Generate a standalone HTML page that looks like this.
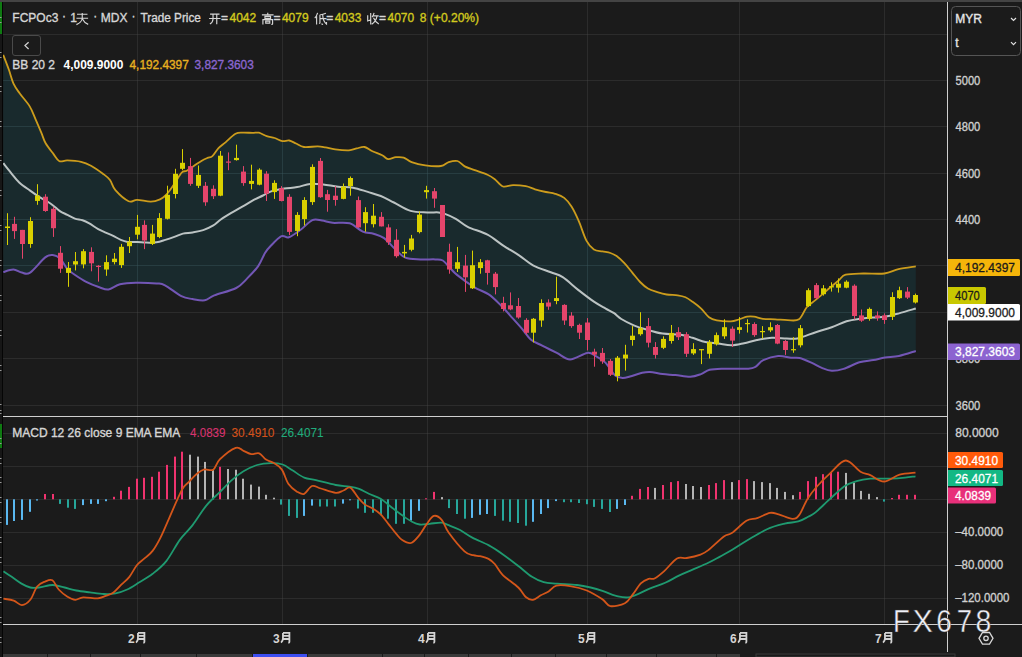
<!DOCTYPE html><html><head><meta charset="utf-8"><style>html,body{margin:0;padding:0;background:#1b1b1b;overflow:hidden}svg{display:block}text{font-family:"Liberation Sans",sans-serif}</style></head><body>
<svg width="1022" height="657" viewBox="0 0 1022 657">
<rect x="0" y="0" width="1022" height="657" fill="#1b1b1b"/>
<rect x="0" y="0" width="1022" height="2" fill="#444444"/>
<rect x="3" y="34" width="944" height="1" fill="#4a4a4a" fill-opacity="0.38"/><rect x="3" y="80" width="944" height="1" fill="#4a4a4a" fill-opacity="0.38"/><rect x="3" y="126" width="944" height="1" fill="#4a4a4a" fill-opacity="0.38"/><rect x="3" y="173" width="944" height="1" fill="#4a4a4a" fill-opacity="0.38"/><rect x="3" y="219" width="944" height="1" fill="#4a4a4a" fill-opacity="0.38"/><rect x="3" y="265" width="944" height="1" fill="#4a4a4a" fill-opacity="0.38"/><rect x="3" y="312" width="944" height="1" fill="#4a4a4a" fill-opacity="0.38"/><rect x="3" y="358" width="944" height="1" fill="#4a4a4a" fill-opacity="0.38"/><rect x="3" y="405" width="944" height="1" fill="#4a4a4a" fill-opacity="0.38"/><rect x="3" y="433" width="944" height="1" fill="#4a4a4a" fill-opacity="0.38"/><rect x="3" y="466" width="944" height="1" fill="#4a4a4a" fill-opacity="0.38"/><rect x="3" y="499" width="944" height="1" fill="#4a4a4a" fill-opacity="0.38"/><rect x="3" y="532" width="944" height="1" fill="#4a4a4a" fill-opacity="0.38"/><rect x="3" y="565" width="944" height="1" fill="#4a4a4a" fill-opacity="0.38"/><rect x="3" y="598" width="944" height="1" fill="#4a4a4a" fill-opacity="0.38"/><rect x="137" y="2" width="1" height="622" fill="#4a4a4a" fill-opacity="0.38"/><rect x="282" y="2" width="1" height="622" fill="#4a4a4a" fill-opacity="0.38"/><rect x="427" y="2" width="1" height="622" fill="#4a4a4a" fill-opacity="0.38"/><rect x="587" y="2" width="1" height="622" fill="#4a4a4a" fill-opacity="0.38"/><rect x="739" y="2" width="1" height="622" fill="#4a4a4a" fill-opacity="0.38"/><rect x="884" y="2" width="1" height="622" fill="#4a4a4a" fill-opacity="0.38"/>
<defs><clipPath id="bandclip"><path d="M3.20 54.90 C4.15 57.38 7.18 65.02 8.90 69.80 C10.62 74.58 11.68 79.65 13.50 83.60 C15.32 87.55 17.10 89.70 19.80 93.50 C22.50 97.30 27.07 102.10 29.70 106.40 C32.33 110.70 33.63 114.85 35.60 119.30 C37.57 123.75 39.85 129.15 41.50 133.10 C43.15 137.05 43.52 139.53 45.50 143.00 C47.48 146.47 51.08 150.87 53.40 153.90 C55.72 156.93 57.08 160.12 59.40 161.20 C61.72 162.28 63.68 160.30 67.30 160.40 C70.92 160.50 77.15 160.92 81.10 161.80 C85.05 162.68 87.37 163.72 91.00 165.70 C94.63 167.68 99.73 171.32 102.90 173.70 C106.07 176.08 107.92 177.25 110.00 180.00 C112.08 182.75 112.30 186.67 115.40 190.20 C118.50 193.73 124.98 199.60 128.60 201.20 C132.22 202.80 133.40 199.73 137.10 199.80 C140.80 199.87 146.98 201.68 150.80 201.60 C154.62 201.52 157.45 200.40 160.00 199.30 C162.55 198.20 164.07 197.03 166.10 195.00 C168.13 192.97 170.17 190.03 172.20 187.10 C174.23 184.17 176.58 179.93 178.30 177.40 C180.02 174.87 181.08 173.02 182.50 171.90 C183.92 170.78 184.87 171.72 186.80 170.70 C188.73 169.68 191.67 167.43 194.10 165.80 C196.53 164.17 199.17 162.22 201.40 160.90 C203.63 159.58 205.67 158.70 207.50 157.90 C209.33 157.10 210.57 157.73 212.40 156.10 C214.23 154.47 216.27 150.43 218.50 148.10 C220.73 145.77 222.97 144.48 225.80 142.10 C228.63 139.72 232.67 135.38 235.50 133.80 C238.33 132.22 239.95 132.75 242.80 132.60 C245.65 132.45 249.92 132.88 252.60 132.90 C255.28 132.92 256.55 132.15 258.90 132.70 C261.25 133.25 264.08 135.32 266.70 136.20 C269.32 137.08 271.98 137.18 274.60 138.00 C277.22 138.82 279.97 140.68 282.40 141.10 C284.83 141.52 286.92 140.10 289.20 140.50 C291.48 140.90 293.65 142.42 296.10 143.50 C298.55 144.58 300.32 146.52 303.90 147.00 C307.48 147.48 314.00 146.33 317.60 146.40 C321.20 146.47 322.57 146.90 325.50 147.40 C328.43 147.90 331.30 148.92 335.20 149.40 C339.10 149.88 345.30 150.47 348.90 150.30 C352.50 150.13 354.18 148.95 356.80 148.40 C359.42 147.85 362.00 146.52 364.60 147.00 C367.20 147.48 369.47 149.93 372.40 151.30 C375.33 152.67 379.58 153.90 382.20 155.20 C384.82 156.50 385.82 158.77 388.10 159.10 C390.38 159.43 393.30 157.45 395.90 157.20 C398.50 156.95 401.08 156.78 403.70 157.60 C406.32 158.42 408.00 160.80 411.60 162.10 C415.20 163.40 420.42 164.75 425.30 165.40 C430.18 166.05 437.00 166.55 440.90 166.00 C444.80 165.45 445.95 162.93 448.70 162.10 C451.45 161.27 454.73 160.28 457.40 161.00 C460.07 161.72 461.82 164.88 464.70 166.40 C467.58 167.92 470.90 168.72 474.70 170.10 C478.50 171.48 484.15 173.18 487.50 174.70 C490.85 176.22 492.22 177.23 494.80 179.20 C497.38 181.17 499.95 185.52 503.00 186.50 C506.05 187.48 509.30 185.15 513.10 185.10 C516.90 185.05 522.15 185.50 525.80 186.20 C529.45 186.90 531.65 188.33 535.00 189.30 C538.35 190.27 542.55 191.25 545.90 192.00 C549.25 192.75 552.05 192.82 555.10 193.80 C558.15 194.78 561.47 195.77 564.20 197.90 C566.93 200.03 569.07 202.72 571.50 206.60 C573.93 210.48 576.32 215.53 578.80 221.20 C581.28 226.87 583.88 235.90 586.40 240.60 C588.92 245.30 591.22 247.60 593.90 249.40 C596.58 251.20 599.75 250.80 602.50 251.40 C605.25 252.00 608.05 252.22 610.40 253.00 C612.75 253.78 614.27 254.40 616.60 256.10 C618.93 257.80 621.78 260.45 624.40 263.20 C627.02 265.95 629.68 269.47 632.30 272.60 C634.92 275.73 637.50 279.35 640.10 282.00 C642.70 284.65 645.03 286.82 647.90 288.50 C650.77 290.18 654.17 291.10 657.30 292.10 C660.43 293.10 663.30 293.97 666.70 294.50 C670.10 295.03 674.57 294.83 677.70 295.30 C680.83 295.77 682.90 296.13 685.50 297.30 C688.10 298.47 690.68 300.42 693.30 302.30 C695.92 304.18 698.58 306.12 701.20 308.60 C703.82 311.08 706.40 315.25 709.00 317.20 C711.60 319.15 713.15 319.60 716.80 320.30 C720.45 321.00 727.25 321.53 730.90 321.40 C734.55 321.27 736.02 320.30 738.70 319.50 C741.38 318.70 744.43 317.08 747.00 316.60 C749.57 316.12 751.45 316.23 754.10 316.60 C756.75 316.97 759.38 318.35 762.90 318.80 C766.42 319.25 771.08 319.07 775.20 319.30 C779.32 319.53 783.63 320.20 787.60 320.20 C791.57 320.20 795.78 321.50 799.00 319.30 C802.22 317.10 804.12 310.23 806.90 307.00 C809.68 303.77 812.17 302.85 815.70 299.90 C819.23 296.95 824.28 292.53 828.10 289.30 C831.92 286.07 835.67 282.93 838.60 280.50 C841.53 278.07 841.58 275.87 845.70 274.70 C849.82 273.53 856.85 273.70 863.30 273.50 C869.75 273.30 878.53 274.23 884.40 273.50 C890.27 272.77 893.27 270.28 898.50 269.10 C903.73 267.92 912.92 266.85 915.80 266.40 L915.80 351.00 C913.00 351.83 904.12 354.90 899.00 356.00 C893.88 357.10 889.38 356.93 885.10 357.60 C880.82 358.27 877.58 359.22 873.30 360.00 C869.02 360.78 864.35 360.82 859.40 362.30 C854.45 363.78 848.22 367.48 843.60 368.90 C838.98 370.32 835.33 370.97 831.70 370.80 C828.07 370.63 825.10 369.22 821.80 367.90 C818.50 366.58 815.60 364.55 811.90 362.90 C808.20 361.25 803.08 358.87 799.60 358.00 C796.12 357.13 794.57 358.03 791.00 357.70 C787.43 357.37 782.82 355.58 778.20 356.00 C773.58 356.42 767.03 358.43 763.30 360.20 C759.57 361.97 758.28 365.18 755.80 366.60 C753.32 368.02 753.90 368.35 748.40 368.70 C742.90 369.05 729.27 368.52 722.80 368.70 C716.33 368.88 713.23 368.90 709.60 369.80 C705.97 370.70 704.20 372.93 701.00 374.10 C697.80 375.27 694.67 376.63 690.40 376.80 C686.13 376.97 680.03 375.55 675.40 375.10 C670.77 374.65 666.85 374.63 662.60 374.10 C658.35 373.57 653.45 372.08 649.90 371.90 C646.35 371.72 644.62 372.23 641.30 373.00 C637.98 373.77 633.13 375.68 630.00 376.50 C626.87 377.32 624.97 378.07 622.50 377.90 C620.03 377.73 618.05 378.05 615.20 375.50 C612.35 372.95 608.65 365.85 605.40 362.60 C602.15 359.35 598.73 357.62 595.70 356.00 C592.67 354.38 591.47 352.33 587.20 352.90 C582.93 353.47 575.17 359.40 570.10 359.40 C565.03 359.40 561.45 355.20 556.80 352.90 C552.15 350.60 546.50 347.80 542.20 345.60 C537.90 343.40 534.25 342.37 531.00 339.70 C527.75 337.03 525.70 333.10 522.70 329.60 C519.70 326.10 516.65 322.75 513.00 318.70 C509.35 314.65 504.85 309.35 500.80 305.30 C496.75 301.25 493.15 297.43 488.70 294.40 C484.25 291.37 479.38 290.35 474.10 287.10 C468.82 283.85 461.07 278.15 457.00 274.90 C452.93 271.65 452.07 270.00 449.70 267.60 C447.33 265.20 445.20 261.87 442.80 260.50 C440.40 259.13 439.03 259.58 435.30 259.40 C431.57 259.22 425.38 259.68 420.40 259.40 C415.42 259.12 409.67 259.48 405.40 257.70 C401.13 255.92 398.35 251.97 394.80 248.70 C391.25 245.43 387.65 240.58 384.10 238.10 C380.55 235.62 377.05 234.87 373.50 233.80 C369.95 232.73 366.77 233.45 362.80 231.70 C358.83 229.95 354.73 224.78 349.70 223.30 C344.67 221.82 337.22 223.25 332.60 222.80 C327.98 222.35 325.37 221.03 322.00 220.60 C318.63 220.17 315.97 218.67 312.40 220.20 C308.83 221.73 304.52 226.95 300.60 229.80 C296.68 232.65 292.08 236.23 288.90 237.30 C285.72 238.37 284.52 234.78 281.50 236.20 C278.48 237.62 273.55 243.00 270.80 245.80 C268.05 248.60 267.10 249.62 265.00 253.00 C262.90 256.38 261.17 261.87 258.20 266.10 C255.23 270.33 250.87 274.75 247.20 278.40 C243.53 282.05 241.68 285.17 236.20 288.00 C230.72 290.83 219.55 293.35 214.30 295.40 C209.05 297.45 208.35 299.70 204.70 300.30 C201.05 300.90 196.28 299.68 192.40 299.00 C188.52 298.32 185.97 298.48 181.40 296.20 C176.83 293.92 169.15 287.43 165.00 285.30 C160.85 283.17 161.35 283.83 156.50 283.40 C151.65 282.97 141.98 282.55 135.90 282.70 C129.82 282.85 124.57 283.17 120.00 284.30 C115.43 285.43 111.93 289.00 108.50 289.50 C105.07 290.00 103.20 288.62 99.40 287.30 C95.60 285.98 89.98 283.82 85.70 281.60 C81.42 279.38 76.82 276.15 73.70 274.00 C70.58 271.85 69.23 271.25 67.00 268.70 C64.77 266.15 62.68 260.98 60.30 258.70 C57.92 256.42 55.22 255.22 52.70 255.00 C50.18 254.78 48.97 254.47 45.20 257.40 C41.43 260.33 34.00 270.07 30.10 272.60 C26.20 275.13 24.58 273.10 21.80 272.60 C19.02 272.10 16.48 269.68 13.40 269.60 C10.32 269.52 4.98 271.68 3.30 272.10 Z"/></clipPath></defs>
<path d="M3.20 54.90 C4.15 57.38 7.18 65.02 8.90 69.80 C10.62 74.58 11.68 79.65 13.50 83.60 C15.32 87.55 17.10 89.70 19.80 93.50 C22.50 97.30 27.07 102.10 29.70 106.40 C32.33 110.70 33.63 114.85 35.60 119.30 C37.57 123.75 39.85 129.15 41.50 133.10 C43.15 137.05 43.52 139.53 45.50 143.00 C47.48 146.47 51.08 150.87 53.40 153.90 C55.72 156.93 57.08 160.12 59.40 161.20 C61.72 162.28 63.68 160.30 67.30 160.40 C70.92 160.50 77.15 160.92 81.10 161.80 C85.05 162.68 87.37 163.72 91.00 165.70 C94.63 167.68 99.73 171.32 102.90 173.70 C106.07 176.08 107.92 177.25 110.00 180.00 C112.08 182.75 112.30 186.67 115.40 190.20 C118.50 193.73 124.98 199.60 128.60 201.20 C132.22 202.80 133.40 199.73 137.10 199.80 C140.80 199.87 146.98 201.68 150.80 201.60 C154.62 201.52 157.45 200.40 160.00 199.30 C162.55 198.20 164.07 197.03 166.10 195.00 C168.13 192.97 170.17 190.03 172.20 187.10 C174.23 184.17 176.58 179.93 178.30 177.40 C180.02 174.87 181.08 173.02 182.50 171.90 C183.92 170.78 184.87 171.72 186.80 170.70 C188.73 169.68 191.67 167.43 194.10 165.80 C196.53 164.17 199.17 162.22 201.40 160.90 C203.63 159.58 205.67 158.70 207.50 157.90 C209.33 157.10 210.57 157.73 212.40 156.10 C214.23 154.47 216.27 150.43 218.50 148.10 C220.73 145.77 222.97 144.48 225.80 142.10 C228.63 139.72 232.67 135.38 235.50 133.80 C238.33 132.22 239.95 132.75 242.80 132.60 C245.65 132.45 249.92 132.88 252.60 132.90 C255.28 132.92 256.55 132.15 258.90 132.70 C261.25 133.25 264.08 135.32 266.70 136.20 C269.32 137.08 271.98 137.18 274.60 138.00 C277.22 138.82 279.97 140.68 282.40 141.10 C284.83 141.52 286.92 140.10 289.20 140.50 C291.48 140.90 293.65 142.42 296.10 143.50 C298.55 144.58 300.32 146.52 303.90 147.00 C307.48 147.48 314.00 146.33 317.60 146.40 C321.20 146.47 322.57 146.90 325.50 147.40 C328.43 147.90 331.30 148.92 335.20 149.40 C339.10 149.88 345.30 150.47 348.90 150.30 C352.50 150.13 354.18 148.95 356.80 148.40 C359.42 147.85 362.00 146.52 364.60 147.00 C367.20 147.48 369.47 149.93 372.40 151.30 C375.33 152.67 379.58 153.90 382.20 155.20 C384.82 156.50 385.82 158.77 388.10 159.10 C390.38 159.43 393.30 157.45 395.90 157.20 C398.50 156.95 401.08 156.78 403.70 157.60 C406.32 158.42 408.00 160.80 411.60 162.10 C415.20 163.40 420.42 164.75 425.30 165.40 C430.18 166.05 437.00 166.55 440.90 166.00 C444.80 165.45 445.95 162.93 448.70 162.10 C451.45 161.27 454.73 160.28 457.40 161.00 C460.07 161.72 461.82 164.88 464.70 166.40 C467.58 167.92 470.90 168.72 474.70 170.10 C478.50 171.48 484.15 173.18 487.50 174.70 C490.85 176.22 492.22 177.23 494.80 179.20 C497.38 181.17 499.95 185.52 503.00 186.50 C506.05 187.48 509.30 185.15 513.10 185.10 C516.90 185.05 522.15 185.50 525.80 186.20 C529.45 186.90 531.65 188.33 535.00 189.30 C538.35 190.27 542.55 191.25 545.90 192.00 C549.25 192.75 552.05 192.82 555.10 193.80 C558.15 194.78 561.47 195.77 564.20 197.90 C566.93 200.03 569.07 202.72 571.50 206.60 C573.93 210.48 576.32 215.53 578.80 221.20 C581.28 226.87 583.88 235.90 586.40 240.60 C588.92 245.30 591.22 247.60 593.90 249.40 C596.58 251.20 599.75 250.80 602.50 251.40 C605.25 252.00 608.05 252.22 610.40 253.00 C612.75 253.78 614.27 254.40 616.60 256.10 C618.93 257.80 621.78 260.45 624.40 263.20 C627.02 265.95 629.68 269.47 632.30 272.60 C634.92 275.73 637.50 279.35 640.10 282.00 C642.70 284.65 645.03 286.82 647.90 288.50 C650.77 290.18 654.17 291.10 657.30 292.10 C660.43 293.10 663.30 293.97 666.70 294.50 C670.10 295.03 674.57 294.83 677.70 295.30 C680.83 295.77 682.90 296.13 685.50 297.30 C688.10 298.47 690.68 300.42 693.30 302.30 C695.92 304.18 698.58 306.12 701.20 308.60 C703.82 311.08 706.40 315.25 709.00 317.20 C711.60 319.15 713.15 319.60 716.80 320.30 C720.45 321.00 727.25 321.53 730.90 321.40 C734.55 321.27 736.02 320.30 738.70 319.50 C741.38 318.70 744.43 317.08 747.00 316.60 C749.57 316.12 751.45 316.23 754.10 316.60 C756.75 316.97 759.38 318.35 762.90 318.80 C766.42 319.25 771.08 319.07 775.20 319.30 C779.32 319.53 783.63 320.20 787.60 320.20 C791.57 320.20 795.78 321.50 799.00 319.30 C802.22 317.10 804.12 310.23 806.90 307.00 C809.68 303.77 812.17 302.85 815.70 299.90 C819.23 296.95 824.28 292.53 828.10 289.30 C831.92 286.07 835.67 282.93 838.60 280.50 C841.53 278.07 841.58 275.87 845.70 274.70 C849.82 273.53 856.85 273.70 863.30 273.50 C869.75 273.30 878.53 274.23 884.40 273.50 C890.27 272.77 893.27 270.28 898.50 269.10 C903.73 267.92 912.92 266.85 915.80 266.40 L915.80 351.00 C913.00 351.83 904.12 354.90 899.00 356.00 C893.88 357.10 889.38 356.93 885.10 357.60 C880.82 358.27 877.58 359.22 873.30 360.00 C869.02 360.78 864.35 360.82 859.40 362.30 C854.45 363.78 848.22 367.48 843.60 368.90 C838.98 370.32 835.33 370.97 831.70 370.80 C828.07 370.63 825.10 369.22 821.80 367.90 C818.50 366.58 815.60 364.55 811.90 362.90 C808.20 361.25 803.08 358.87 799.60 358.00 C796.12 357.13 794.57 358.03 791.00 357.70 C787.43 357.37 782.82 355.58 778.20 356.00 C773.58 356.42 767.03 358.43 763.30 360.20 C759.57 361.97 758.28 365.18 755.80 366.60 C753.32 368.02 753.90 368.35 748.40 368.70 C742.90 369.05 729.27 368.52 722.80 368.70 C716.33 368.88 713.23 368.90 709.60 369.80 C705.97 370.70 704.20 372.93 701.00 374.10 C697.80 375.27 694.67 376.63 690.40 376.80 C686.13 376.97 680.03 375.55 675.40 375.10 C670.77 374.65 666.85 374.63 662.60 374.10 C658.35 373.57 653.45 372.08 649.90 371.90 C646.35 371.72 644.62 372.23 641.30 373.00 C637.98 373.77 633.13 375.68 630.00 376.50 C626.87 377.32 624.97 378.07 622.50 377.90 C620.03 377.73 618.05 378.05 615.20 375.50 C612.35 372.95 608.65 365.85 605.40 362.60 C602.15 359.35 598.73 357.62 595.70 356.00 C592.67 354.38 591.47 352.33 587.20 352.90 C582.93 353.47 575.17 359.40 570.10 359.40 C565.03 359.40 561.45 355.20 556.80 352.90 C552.15 350.60 546.50 347.80 542.20 345.60 C537.90 343.40 534.25 342.37 531.00 339.70 C527.75 337.03 525.70 333.10 522.70 329.60 C519.70 326.10 516.65 322.75 513.00 318.70 C509.35 314.65 504.85 309.35 500.80 305.30 C496.75 301.25 493.15 297.43 488.70 294.40 C484.25 291.37 479.38 290.35 474.10 287.10 C468.82 283.85 461.07 278.15 457.00 274.90 C452.93 271.65 452.07 270.00 449.70 267.60 C447.33 265.20 445.20 261.87 442.80 260.50 C440.40 259.13 439.03 259.58 435.30 259.40 C431.57 259.22 425.38 259.68 420.40 259.40 C415.42 259.12 409.67 259.48 405.40 257.70 C401.13 255.92 398.35 251.97 394.80 248.70 C391.25 245.43 387.65 240.58 384.10 238.10 C380.55 235.62 377.05 234.87 373.50 233.80 C369.95 232.73 366.77 233.45 362.80 231.70 C358.83 229.95 354.73 224.78 349.70 223.30 C344.67 221.82 337.22 223.25 332.60 222.80 C327.98 222.35 325.37 221.03 322.00 220.60 C318.63 220.17 315.97 218.67 312.40 220.20 C308.83 221.73 304.52 226.95 300.60 229.80 C296.68 232.65 292.08 236.23 288.90 237.30 C285.72 238.37 284.52 234.78 281.50 236.20 C278.48 237.62 273.55 243.00 270.80 245.80 C268.05 248.60 267.10 249.62 265.00 253.00 C262.90 256.38 261.17 261.87 258.20 266.10 C255.23 270.33 250.87 274.75 247.20 278.40 C243.53 282.05 241.68 285.17 236.20 288.00 C230.72 290.83 219.55 293.35 214.30 295.40 C209.05 297.45 208.35 299.70 204.70 300.30 C201.05 300.90 196.28 299.68 192.40 299.00 C188.52 298.32 185.97 298.48 181.40 296.20 C176.83 293.92 169.15 287.43 165.00 285.30 C160.85 283.17 161.35 283.83 156.50 283.40 C151.65 282.97 141.98 282.55 135.90 282.70 C129.82 282.85 124.57 283.17 120.00 284.30 C115.43 285.43 111.93 289.00 108.50 289.50 C105.07 290.00 103.20 288.62 99.40 287.30 C95.60 285.98 89.98 283.82 85.70 281.60 C81.42 279.38 76.82 276.15 73.70 274.00 C70.58 271.85 69.23 271.25 67.00 268.70 C64.77 266.15 62.68 260.98 60.30 258.70 C57.92 256.42 55.22 255.22 52.70 255.00 C50.18 254.78 48.97 254.47 45.20 257.40 C41.43 260.33 34.00 270.07 30.10 272.60 C26.20 275.13 24.58 273.10 21.80 272.60 C19.02 272.10 16.48 269.68 13.40 269.60 C10.32 269.52 4.98 271.68 3.30 272.10 Z" fill="#192a2d"/>
<g clip-path="url(#bandclip)"><rect x="3" y="34" width="944" height="1" fill="#3c5a60" fill-opacity="0.4"/><rect x="3" y="80" width="944" height="1" fill="#3c5a60" fill-opacity="0.4"/><rect x="3" y="126" width="944" height="1" fill="#3c5a60" fill-opacity="0.4"/><rect x="3" y="173" width="944" height="1" fill="#3c5a60" fill-opacity="0.4"/><rect x="3" y="219" width="944" height="1" fill="#3c5a60" fill-opacity="0.4"/><rect x="3" y="265" width="944" height="1" fill="#3c5a60" fill-opacity="0.4"/><rect x="3" y="312" width="944" height="1" fill="#3c5a60" fill-opacity="0.4"/><rect x="3" y="358" width="944" height="1" fill="#3c5a60" fill-opacity="0.4"/><rect x="3" y="405" width="944" height="1" fill="#3c5a60" fill-opacity="0.4"/><rect x="3" y="433" width="944" height="1" fill="#3c5a60" fill-opacity="0.4"/><rect x="3" y="466" width="944" height="1" fill="#3c5a60" fill-opacity="0.4"/><rect x="3" y="499" width="944" height="1" fill="#3c5a60" fill-opacity="0.4"/><rect x="3" y="532" width="944" height="1" fill="#3c5a60" fill-opacity="0.4"/><rect x="3" y="565" width="944" height="1" fill="#3c5a60" fill-opacity="0.4"/><rect x="3" y="598" width="944" height="1" fill="#3c5a60" fill-opacity="0.4"/><rect x="137" y="2" width="1" height="622" fill="#3c5a60" fill-opacity="0.4"/><rect x="282" y="2" width="1" height="622" fill="#3c5a60" fill-opacity="0.4"/><rect x="427" y="2" width="1" height="622" fill="#3c5a60" fill-opacity="0.4"/><rect x="587" y="2" width="1" height="622" fill="#3c5a60" fill-opacity="0.4"/><rect x="739" y="2" width="1" height="622" fill="#3c5a60" fill-opacity="0.4"/><rect x="884" y="2" width="1" height="622" fill="#3c5a60" fill-opacity="0.4"/></g>
<path d="M3.20 54.90 C4.15 57.38 7.18 65.02 8.90 69.80 C10.62 74.58 11.68 79.65 13.50 83.60 C15.32 87.55 17.10 89.70 19.80 93.50 C22.50 97.30 27.07 102.10 29.70 106.40 C32.33 110.70 33.63 114.85 35.60 119.30 C37.57 123.75 39.85 129.15 41.50 133.10 C43.15 137.05 43.52 139.53 45.50 143.00 C47.48 146.47 51.08 150.87 53.40 153.90 C55.72 156.93 57.08 160.12 59.40 161.20 C61.72 162.28 63.68 160.30 67.30 160.40 C70.92 160.50 77.15 160.92 81.10 161.80 C85.05 162.68 87.37 163.72 91.00 165.70 C94.63 167.68 99.73 171.32 102.90 173.70 C106.07 176.08 107.92 177.25 110.00 180.00 C112.08 182.75 112.30 186.67 115.40 190.20 C118.50 193.73 124.98 199.60 128.60 201.20 C132.22 202.80 133.40 199.73 137.10 199.80 C140.80 199.87 146.98 201.68 150.80 201.60 C154.62 201.52 157.45 200.40 160.00 199.30 C162.55 198.20 164.07 197.03 166.10 195.00 C168.13 192.97 170.17 190.03 172.20 187.10 C174.23 184.17 176.58 179.93 178.30 177.40 C180.02 174.87 181.08 173.02 182.50 171.90 C183.92 170.78 184.87 171.72 186.80 170.70 C188.73 169.68 191.67 167.43 194.10 165.80 C196.53 164.17 199.17 162.22 201.40 160.90 C203.63 159.58 205.67 158.70 207.50 157.90 C209.33 157.10 210.57 157.73 212.40 156.10 C214.23 154.47 216.27 150.43 218.50 148.10 C220.73 145.77 222.97 144.48 225.80 142.10 C228.63 139.72 232.67 135.38 235.50 133.80 C238.33 132.22 239.95 132.75 242.80 132.60 C245.65 132.45 249.92 132.88 252.60 132.90 C255.28 132.92 256.55 132.15 258.90 132.70 C261.25 133.25 264.08 135.32 266.70 136.20 C269.32 137.08 271.98 137.18 274.60 138.00 C277.22 138.82 279.97 140.68 282.40 141.10 C284.83 141.52 286.92 140.10 289.20 140.50 C291.48 140.90 293.65 142.42 296.10 143.50 C298.55 144.58 300.32 146.52 303.90 147.00 C307.48 147.48 314.00 146.33 317.60 146.40 C321.20 146.47 322.57 146.90 325.50 147.40 C328.43 147.90 331.30 148.92 335.20 149.40 C339.10 149.88 345.30 150.47 348.90 150.30 C352.50 150.13 354.18 148.95 356.80 148.40 C359.42 147.85 362.00 146.52 364.60 147.00 C367.20 147.48 369.47 149.93 372.40 151.30 C375.33 152.67 379.58 153.90 382.20 155.20 C384.82 156.50 385.82 158.77 388.10 159.10 C390.38 159.43 393.30 157.45 395.90 157.20 C398.50 156.95 401.08 156.78 403.70 157.60 C406.32 158.42 408.00 160.80 411.60 162.10 C415.20 163.40 420.42 164.75 425.30 165.40 C430.18 166.05 437.00 166.55 440.90 166.00 C444.80 165.45 445.95 162.93 448.70 162.10 C451.45 161.27 454.73 160.28 457.40 161.00 C460.07 161.72 461.82 164.88 464.70 166.40 C467.58 167.92 470.90 168.72 474.70 170.10 C478.50 171.48 484.15 173.18 487.50 174.70 C490.85 176.22 492.22 177.23 494.80 179.20 C497.38 181.17 499.95 185.52 503.00 186.50 C506.05 187.48 509.30 185.15 513.10 185.10 C516.90 185.05 522.15 185.50 525.80 186.20 C529.45 186.90 531.65 188.33 535.00 189.30 C538.35 190.27 542.55 191.25 545.90 192.00 C549.25 192.75 552.05 192.82 555.10 193.80 C558.15 194.78 561.47 195.77 564.20 197.90 C566.93 200.03 569.07 202.72 571.50 206.60 C573.93 210.48 576.32 215.53 578.80 221.20 C581.28 226.87 583.88 235.90 586.40 240.60 C588.92 245.30 591.22 247.60 593.90 249.40 C596.58 251.20 599.75 250.80 602.50 251.40 C605.25 252.00 608.05 252.22 610.40 253.00 C612.75 253.78 614.27 254.40 616.60 256.10 C618.93 257.80 621.78 260.45 624.40 263.20 C627.02 265.95 629.68 269.47 632.30 272.60 C634.92 275.73 637.50 279.35 640.10 282.00 C642.70 284.65 645.03 286.82 647.90 288.50 C650.77 290.18 654.17 291.10 657.30 292.10 C660.43 293.10 663.30 293.97 666.70 294.50 C670.10 295.03 674.57 294.83 677.70 295.30 C680.83 295.77 682.90 296.13 685.50 297.30 C688.10 298.47 690.68 300.42 693.30 302.30 C695.92 304.18 698.58 306.12 701.20 308.60 C703.82 311.08 706.40 315.25 709.00 317.20 C711.60 319.15 713.15 319.60 716.80 320.30 C720.45 321.00 727.25 321.53 730.90 321.40 C734.55 321.27 736.02 320.30 738.70 319.50 C741.38 318.70 744.43 317.08 747.00 316.60 C749.57 316.12 751.45 316.23 754.10 316.60 C756.75 316.97 759.38 318.35 762.90 318.80 C766.42 319.25 771.08 319.07 775.20 319.30 C779.32 319.53 783.63 320.20 787.60 320.20 C791.57 320.20 795.78 321.50 799.00 319.30 C802.22 317.10 804.12 310.23 806.90 307.00 C809.68 303.77 812.17 302.85 815.70 299.90 C819.23 296.95 824.28 292.53 828.10 289.30 C831.92 286.07 835.67 282.93 838.60 280.50 C841.53 278.07 841.58 275.87 845.70 274.70 C849.82 273.53 856.85 273.70 863.30 273.50 C869.75 273.30 878.53 274.23 884.40 273.50 C890.27 272.77 893.27 270.28 898.50 269.10 C903.73 267.92 912.92 266.85 915.80 266.40" fill="none" stroke="#cc9c1c" stroke-width="1.8" stroke-linejoin="round"/>
<path d="M3.30 272.10 C4.98 271.68 10.32 269.52 13.40 269.60 C16.48 269.68 19.02 272.10 21.80 272.60 C24.58 273.10 26.20 275.13 30.10 272.60 C34.00 270.07 41.43 260.33 45.20 257.40 C48.97 254.47 50.18 254.78 52.70 255.00 C55.22 255.22 57.92 256.42 60.30 258.70 C62.68 260.98 64.77 266.15 67.00 268.70 C69.23 271.25 70.58 271.85 73.70 274.00 C76.82 276.15 81.42 279.38 85.70 281.60 C89.98 283.82 95.60 285.98 99.40 287.30 C103.20 288.62 105.07 290.00 108.50 289.50 C111.93 289.00 115.43 285.43 120.00 284.30 C124.57 283.17 129.82 282.85 135.90 282.70 C141.98 282.55 151.65 282.97 156.50 283.40 C161.35 283.83 160.85 283.17 165.00 285.30 C169.15 287.43 176.83 293.92 181.40 296.20 C185.97 298.48 188.52 298.32 192.40 299.00 C196.28 299.68 201.05 300.90 204.70 300.30 C208.35 299.70 209.05 297.45 214.30 295.40 C219.55 293.35 230.72 290.83 236.20 288.00 C241.68 285.17 243.53 282.05 247.20 278.40 C250.87 274.75 255.23 270.33 258.20 266.10 C261.17 261.87 262.90 256.38 265.00 253.00 C267.10 249.62 268.05 248.60 270.80 245.80 C273.55 243.00 278.48 237.62 281.50 236.20 C284.52 234.78 285.72 238.37 288.90 237.30 C292.08 236.23 296.68 232.65 300.60 229.80 C304.52 226.95 308.83 221.73 312.40 220.20 C315.97 218.67 318.63 220.17 322.00 220.60 C325.37 221.03 327.98 222.35 332.60 222.80 C337.22 223.25 344.67 221.82 349.70 223.30 C354.73 224.78 358.83 229.95 362.80 231.70 C366.77 233.45 369.95 232.73 373.50 233.80 C377.05 234.87 380.55 235.62 384.10 238.10 C387.65 240.58 391.25 245.43 394.80 248.70 C398.35 251.97 401.13 255.92 405.40 257.70 C409.67 259.48 415.42 259.12 420.40 259.40 C425.38 259.68 431.57 259.22 435.30 259.40 C439.03 259.58 440.40 259.13 442.80 260.50 C445.20 261.87 447.33 265.20 449.70 267.60 C452.07 270.00 452.93 271.65 457.00 274.90 C461.07 278.15 468.82 283.85 474.10 287.10 C479.38 290.35 484.25 291.37 488.70 294.40 C493.15 297.43 496.75 301.25 500.80 305.30 C504.85 309.35 509.35 314.65 513.00 318.70 C516.65 322.75 519.70 326.10 522.70 329.60 C525.70 333.10 527.75 337.03 531.00 339.70 C534.25 342.37 537.90 343.40 542.20 345.60 C546.50 347.80 552.15 350.60 556.80 352.90 C561.45 355.20 565.03 359.40 570.10 359.40 C575.17 359.40 582.93 353.47 587.20 352.90 C591.47 352.33 592.67 354.38 595.70 356.00 C598.73 357.62 602.15 359.35 605.40 362.60 C608.65 365.85 612.35 372.95 615.20 375.50 C618.05 378.05 620.03 377.73 622.50 377.90 C624.97 378.07 626.87 377.32 630.00 376.50 C633.13 375.68 637.98 373.77 641.30 373.00 C644.62 372.23 646.35 371.72 649.90 371.90 C653.45 372.08 658.35 373.57 662.60 374.10 C666.85 374.63 670.77 374.65 675.40 375.10 C680.03 375.55 686.13 376.97 690.40 376.80 C694.67 376.63 697.80 375.27 701.00 374.10 C704.20 372.93 705.97 370.70 709.60 369.80 C713.23 368.90 716.33 368.88 722.80 368.70 C729.27 368.52 742.90 369.05 748.40 368.70 C753.90 368.35 753.32 368.02 755.80 366.60 C758.28 365.18 759.57 361.97 763.30 360.20 C767.03 358.43 773.58 356.42 778.20 356.00 C782.82 355.58 787.43 357.37 791.00 357.70 C794.57 358.03 796.12 357.13 799.60 358.00 C803.08 358.87 808.20 361.25 811.90 362.90 C815.60 364.55 818.50 366.58 821.80 367.90 C825.10 369.22 828.07 370.63 831.70 370.80 C835.33 370.97 838.98 370.32 843.60 368.90 C848.22 367.48 854.45 363.78 859.40 362.30 C864.35 360.82 869.02 360.78 873.30 360.00 C877.58 359.22 880.82 358.27 885.10 357.60 C889.38 356.93 893.88 357.10 899.00 356.00 C904.12 354.90 913.00 351.83 915.80 351.00" fill="none" stroke="#7356b5" stroke-width="2" stroke-linejoin="round"/>
<path d="M3.30 163.20 C4.58 164.80 8.35 169.60 11.00 172.80 C13.65 176.00 16.02 179.43 19.20 182.40 C22.38 185.37 26.63 188.10 30.10 190.60 C33.57 193.10 36.87 195.42 40.00 197.40 C43.13 199.38 46.62 201.07 48.90 202.50 C51.18 203.93 51.87 204.57 53.70 206.00 C55.53 207.43 57.62 209.62 59.90 211.10 C62.18 212.58 64.90 213.65 67.40 214.90 C69.90 216.15 72.38 217.72 74.90 218.60 C77.42 219.48 80.10 219.40 82.50 220.20 C84.90 221.00 86.68 221.90 89.30 223.40 C91.92 224.90 95.58 227.72 98.20 229.20 C100.82 230.68 102.50 231.20 105.00 232.30 C107.50 233.40 110.57 234.53 113.20 235.80 C115.83 237.07 118.40 238.88 120.80 239.90 C123.20 240.92 124.87 241.57 127.60 241.90 C130.33 242.23 134.12 241.78 137.20 241.90 C140.28 242.02 142.90 242.53 146.10 242.60 C149.30 242.67 153.20 242.75 156.40 242.30 C159.60 241.85 162.20 240.85 165.30 239.90 C168.40 238.95 172.07 237.65 175.00 236.60 C177.93 235.55 179.97 234.30 182.90 233.60 C185.83 232.90 189.22 232.98 192.60 232.40 C195.98 231.82 199.82 231.22 203.20 230.10 C206.58 228.98 209.97 227.47 212.90 225.70 C215.83 223.93 217.73 221.63 220.80 219.50 C223.87 217.37 227.48 215.18 231.30 212.90 C235.12 210.62 239.88 208.00 243.70 205.80 C247.52 203.60 250.98 201.42 254.20 199.70 C257.42 197.98 260.17 196.88 263.00 195.50 C265.83 194.12 267.67 192.55 271.20 191.40 C274.73 190.25 279.87 189.32 284.20 188.60 C288.53 187.88 292.87 187.88 297.20 187.10 C301.53 186.32 305.87 184.33 310.20 183.90 C314.53 183.47 318.55 184.03 323.20 184.50 C327.85 184.97 333.13 186.17 338.10 186.70 C343.07 187.23 348.05 186.83 353.00 187.70 C357.95 188.57 363.17 190.52 367.80 191.90 C372.43 193.28 376.45 194.23 380.80 196.00 C385.15 197.77 388.93 200.02 393.90 202.50 C398.87 204.98 405.03 209.25 410.60 210.90 C416.17 212.55 422.65 212.15 427.30 212.40 C431.95 212.65 435.57 212.15 438.50 212.40 C441.43 212.65 442.02 212.83 444.90 213.90 C447.78 214.97 452.00 216.65 455.80 218.80 C459.60 220.95 462.42 224.15 467.70 226.80 C472.98 229.45 481.57 231.57 487.50 234.70 C493.43 237.83 498.03 242.15 503.30 245.60 C508.57 249.05 514.15 252.12 519.10 255.40 C524.05 258.68 527.72 262.48 533.00 265.30 C538.28 268.12 545.85 270.32 550.80 272.30 C555.75 274.28 558.08 274.23 562.70 277.20 C567.32 280.17 573.23 285.98 578.50 290.10 C583.77 294.22 589.77 298.82 594.30 301.90 C598.83 304.98 602.40 306.72 605.70 308.60 C609.00 310.48 611.50 311.47 614.10 313.20 C616.70 314.93 618.02 316.98 621.30 319.00 C624.58 321.02 629.75 323.58 633.80 325.30 C637.85 327.02 640.80 327.92 645.60 329.30 C650.40 330.68 656.92 332.72 662.60 333.60 C668.28 334.48 674.72 333.90 679.70 334.60 C684.68 335.30 688.23 336.55 692.50 337.80 C696.77 339.05 701.05 341.15 705.30 342.10 C709.55 343.05 713.67 342.97 718.00 343.50 C722.33 344.03 726.95 345.35 731.30 345.30 C735.65 345.25 739.83 344.08 744.10 343.20 C748.37 342.32 752.28 340.90 756.90 340.00 C761.52 339.10 766.82 338.05 771.80 337.80 C776.78 337.55 782.53 338.40 786.80 338.50 C791.07 338.60 792.57 339.45 797.40 338.40 C802.23 337.35 810.08 334.05 815.80 332.20 C821.52 330.35 826.58 329.12 831.70 327.30 C836.82 325.48 841.88 322.72 846.50 321.30 C851.12 319.88 854.62 319.45 859.40 318.80 C864.18 318.15 870.92 317.73 875.20 317.40 C879.48 317.07 881.13 317.47 885.10 316.80 C889.07 316.13 893.88 314.78 899.00 313.40 C904.12 312.02 913.00 309.32 915.80 308.50" fill="none" stroke="#bcc3c3" stroke-width="2" stroke-linejoin="round"/>
<rect x="7" y="213.2" width="1" height="31.8" fill="#d9d000"/><rect x="5" y="226.5" width="5" height="1.5" fill="#d9d000"/><rect x="14" y="216.8" width="1" height="22.1" fill="#e4456b"/><rect x="12" y="223.9" width="5" height="7.2" fill="#e4456b"/><rect x="22" y="229.9" width="1" height="28.8" fill="#e4456b"/><rect x="20" y="229.9" width="5" height="14.1" fill="#e4456b"/><rect x="30" y="217.2" width="1" height="30.6" fill="#d9d000"/><rect x="28" y="221.0" width="5" height="23.0" fill="#d9d000"/><rect x="37" y="184.2" width="1" height="20.6" fill="#d9d000"/><rect x="35" y="195.6" width="5" height="5.3" fill="#d9d000"/><rect x="45" y="194.2" width="1" height="17.6" fill="#e4456b"/><rect x="43" y="196.7" width="5" height="14.3" fill="#e4456b"/><rect x="53" y="206.8" width="1" height="30.1" fill="#e4456b"/><rect x="51" y="208.8" width="5" height="19.4" fill="#e4456b"/><rect x="60" y="246.1" width="1" height="26.8" fill="#e4456b"/><rect x="58" y="252.8" width="5" height="15.9" fill="#e4456b"/><rect x="68" y="262.0" width="1" height="24.8" fill="#d9d000"/><rect x="66" y="267.9" width="5" height="5.0" fill="#d9d000"/><rect x="75" y="252.0" width="1" height="18.4" fill="#d9d000"/><rect x="73" y="261.2" width="5" height="3.3" fill="#d9d000"/><rect x="83" y="249.1" width="1" height="19.2" fill="#d9d000"/><rect x="81" y="251.2" width="5" height="13.2" fill="#d9d000"/><rect x="91" y="247.3" width="1" height="24.0" fill="#e4456b"/><rect x="89" y="251.9" width="5" height="11.4" fill="#e4456b"/><rect x="98" y="265.1" width="1" height="16.5" fill="#e4456b"/><rect x="96" y="265.8" width="5" height="1.2" fill="#e4456b"/><rect x="106" y="255.3" width="1" height="20.5" fill="#d9d000"/><rect x="104" y="262.1" width="5" height="7.4" fill="#d9d000"/><rect x="114" y="253.0" width="1" height="11.4" fill="#d9d000"/><rect x="112" y="258.7" width="5" height="3.4" fill="#d9d000"/><rect x="121" y="243.9" width="1" height="24.0" fill="#d9d000"/><rect x="119" y="246.8" width="5" height="18.3" fill="#d9d000"/><rect x="129" y="237.0" width="1" height="16.0" fill="#d9d000"/><rect x="127" y="241.6" width="5" height="4.6" fill="#d9d000"/><rect x="137" y="214.9" width="1" height="24.4" fill="#d9d000"/><rect x="135" y="226.8" width="5" height="7.9" fill="#d9d000"/><rect x="144" y="220.4" width="1" height="28.7" fill="#e4456b"/><rect x="142" y="224.9" width="5" height="15.6" fill="#e4456b"/><rect x="152" y="224.9" width="1" height="20.1" fill="#d9d000"/><rect x="150" y="233.6" width="5" height="10.3" fill="#d9d000"/><rect x="159" y="213.1" width="1" height="25.1" fill="#d9d000"/><rect x="157" y="218.1" width="5" height="18.9" fill="#d9d000"/><rect x="167" y="185.7" width="1" height="33.8" fill="#d9d000"/><rect x="165" y="194.8" width="5" height="24.0" fill="#d9d000"/><rect x="175" y="168.8" width="1" height="29.6" fill="#d9d000"/><rect x="173" y="173.8" width="5" height="20.2" fill="#d9d000"/><rect x="182" y="149.1" width="1" height="21.1" fill="#d9d000"/><rect x="180" y="162.8" width="5" height="6.0" fill="#d9d000"/><rect x="190" y="157.9" width="1" height="27.9" fill="#e4456b"/><rect x="188" y="166.1" width="5" height="17.8" fill="#e4456b"/><rect x="198" y="165.5" width="1" height="22.5" fill="#d9d000"/><rect x="196" y="174.9" width="5" height="10.9" fill="#d9d000"/><rect x="205" y="182.0" width="1" height="23.8" fill="#e4456b"/><rect x="203" y="185.8" width="5" height="16.5" fill="#e4456b"/><rect x="213" y="185.3" width="1" height="13.7" fill="#e4456b"/><rect x="211" y="188.8" width="5" height="7.4" fill="#e4456b"/><rect x="220" y="151.0" width="1" height="45.2" fill="#d9d000"/><rect x="218" y="155.7" width="5" height="40.0" fill="#d9d000"/><rect x="228" y="152.4" width="1" height="17.8" fill="#e4456b"/><rect x="226" y="161.5" width="5" height="1.2" fill="#e4456b"/><rect x="236" y="144.7" width="1" height="15.9" fill="#d9d000"/><rect x="234" y="157.9" width="5" height="2.2" fill="#d9d000"/><rect x="243" y="166.1" width="1" height="19.7" fill="#e4456b"/><rect x="241" y="171.6" width="5" height="11.5" fill="#e4456b"/><rect x="251" y="164.7" width="1" height="24.7" fill="#d9d000"/><rect x="249" y="180.9" width="5" height="3.0" fill="#d9d000"/><rect x="259" y="168.3" width="1" height="17.0" fill="#d9d000"/><rect x="257" y="169.7" width="5" height="15.0" fill="#d9d000"/><rect x="266" y="171.2" width="1" height="29.8" fill="#e4456b"/><rect x="264" y="173.7" width="5" height="19.9" fill="#e4456b"/><rect x="274" y="180.3" width="1" height="18.6" fill="#d9d000"/><rect x="272" y="182.9" width="5" height="9.2" fill="#d9d000"/><rect x="281" y="186.1" width="1" height="15.3" fill="#e4456b"/><rect x="279" y="188.2" width="5" height="12.8" fill="#e4456b"/><rect x="289" y="194.2" width="1" height="40.9" fill="#e4456b"/><rect x="287" y="196.8" width="5" height="35.1" fill="#e4456b"/><rect x="297" y="212.1" width="1" height="24.1" fill="#d9d000"/><rect x="295" y="214.9" width="5" height="16.0" fill="#d9d000"/><rect x="304" y="197.2" width="1" height="28.3" fill="#d9d000"/><rect x="302" y="200.0" width="5" height="19.1" fill="#d9d000"/><rect x="312" y="164.3" width="1" height="40.6" fill="#d9d000"/><rect x="310" y="166.9" width="5" height="35.2" fill="#d9d000"/><rect x="320" y="158.0" width="1" height="39.8" fill="#e4456b"/><rect x="318" y="160.9" width="5" height="36.3" fill="#e4456b"/><rect x="327" y="189.9" width="1" height="21.8" fill="#e4456b"/><rect x="325" y="194.2" width="5" height="5.8" fill="#e4456b"/><rect x="335" y="186.1" width="1" height="19.6" fill="#e4456b"/><rect x="333" y="195.7" width="5" height="4.3" fill="#e4456b"/><rect x="343" y="183.5" width="1" height="15.8" fill="#d9d000"/><rect x="341" y="186.5" width="5" height="12.4" fill="#d9d000"/><rect x="350" y="176.5" width="1" height="19.2" fill="#d9d000"/><rect x="348" y="178.0" width="5" height="8.1" fill="#d9d000"/><rect x="358" y="196.5" width="1" height="31.3" fill="#e4456b"/><rect x="356" y="200.1" width="5" height="27.3" fill="#e4456b"/><rect x="365" y="207.2" width="1" height="24.5" fill="#d9d000"/><rect x="363" y="212.1" width="5" height="11.1" fill="#d9d000"/><rect x="373" y="204.0" width="1" height="23.4" fill="#d9d000"/><rect x="371" y="215.7" width="5" height="8.5" fill="#d9d000"/><rect x="381" y="212.1" width="1" height="14.3" fill="#e4456b"/><rect x="379" y="216.8" width="5" height="9.6" fill="#e4456b"/><rect x="388" y="224.2" width="1" height="20.7" fill="#e4456b"/><rect x="386" y="227.4" width="5" height="14.9" fill="#e4456b"/><rect x="396" y="229.1" width="1" height="28.6" fill="#e4456b"/><rect x="394" y="239.8" width="5" height="16.4" fill="#e4456b"/><rect x="404" y="244.9" width="1" height="12.8" fill="#d9d000"/><rect x="402" y="251.9" width="5" height="1.5" fill="#d9d000"/><rect x="411" y="234.9" width="1" height="16.4" fill="#d9d000"/><rect x="409" y="238.5" width="5" height="11.3" fill="#d9d000"/><rect x="419" y="211.4" width="1" height="22.0" fill="#d9d000"/><rect x="417" y="214.6" width="5" height="17.5" fill="#d9d000"/><rect x="426" y="185.8" width="1" height="12.8" fill="#d9d000"/><rect x="424" y="190.1" width="5" height="2.1" fill="#d9d000"/><rect x="434" y="188.0" width="1" height="19.8" fill="#e4456b"/><rect x="432" y="191.2" width="5" height="7.4" fill="#e4456b"/><rect x="442" y="205.0" width="1" height="32.0" fill="#e4456b"/><rect x="440" y="205.0" width="5" height="32.0" fill="#e4456b"/><rect x="449" y="243.7" width="1" height="30.0" fill="#e4456b"/><rect x="447" y="251.8" width="5" height="17.7" fill="#e4456b"/><rect x="457" y="246.9" width="1" height="25.1" fill="#d9d000"/><rect x="455" y="262.2" width="5" height="6.6" fill="#d9d000"/><rect x="465" y="254.9" width="1" height="37.0" fill="#e4456b"/><rect x="463" y="265.6" width="5" height="11.7" fill="#e4456b"/><rect x="472" y="250.6" width="1" height="38.4" fill="#d9d000"/><rect x="470" y="265.2" width="5" height="23.1" fill="#d9d000"/><rect x="480" y="259.1" width="1" height="14.6" fill="#d9d000"/><rect x="478" y="262.2" width="5" height="5.9" fill="#d9d000"/><rect x="487" y="259.8" width="1" height="24.8" fill="#e4456b"/><rect x="485" y="260.3" width="5" height="12.6" fill="#e4456b"/><rect x="495" y="272.0" width="1" height="22.4" fill="#e4456b"/><rect x="493" y="273.7" width="5" height="13.4" fill="#e4456b"/><rect x="503" y="296.8" width="1" height="14.6" fill="#e4456b"/><rect x="501" y="302.9" width="5" height="6.1" fill="#e4456b"/><rect x="510" y="292.4" width="1" height="17.8" fill="#e4456b"/><rect x="508" y="305.3" width="5" height="4.1" fill="#e4456b"/><rect x="518" y="298.0" width="1" height="20.7" fill="#e4456b"/><rect x="516" y="306.0" width="5" height="11.5" fill="#e4456b"/><rect x="526" y="318.2" width="1" height="16.3" fill="#e4456b"/><rect x="524" y="319.9" width="5" height="12.9" fill="#e4456b"/><rect x="533" y="318.0" width="1" height="24.4" fill="#d9d000"/><rect x="531" y="318.8" width="5" height="13.9" fill="#d9d000"/><rect x="541" y="299.3" width="1" height="27.5" fill="#d9d000"/><rect x="539" y="303.0" width="5" height="17.5" fill="#d9d000"/><rect x="548" y="299.3" width="1" height="10.5" fill="#e4456b"/><rect x="546" y="302.5" width="5" height="4.1" fill="#e4456b"/><rect x="556" y="276.7" width="1" height="27.5" fill="#d9d000"/><rect x="554" y="298.1" width="5" height="2.9" fill="#d9d000"/><rect x="564" y="304.2" width="1" height="20.7" fill="#e4456b"/><rect x="562" y="304.9" width="5" height="15.6" fill="#e4456b"/><rect x="571" y="312.2" width="1" height="15.6" fill="#e4456b"/><rect x="569" y="315.6" width="5" height="10.5" fill="#e4456b"/><rect x="579" y="323.7" width="1" height="15.3" fill="#e4456b"/><rect x="577" y="324.9" width="5" height="7.8" fill="#e4456b"/><rect x="587" y="318.1" width="1" height="32.3" fill="#e4456b"/><rect x="585" y="322.5" width="5" height="17.5" fill="#e4456b"/><rect x="594" y="348.7" width="1" height="18.0" fill="#e4456b"/><rect x="592" y="351.7" width="5" height="2.9" fill="#e4456b"/><rect x="602" y="348.0" width="1" height="15.8" fill="#e4456b"/><rect x="600" y="352.9" width="5" height="8.5" fill="#e4456b"/><rect x="610" y="359.0" width="1" height="17.0" fill="#e4456b"/><rect x="608" y="360.9" width="5" height="13.9" fill="#e4456b"/><rect x="617" y="356.0" width="1" height="25.3" fill="#d9d000"/><rect x="615" y="357.7" width="5" height="18.3" fill="#d9d000"/><rect x="625" y="344.8" width="1" height="25.8" fill="#d9d000"/><rect x="623" y="354.6" width="5" height="3.9" fill="#d9d000"/><rect x="632" y="326.1" width="1" height="19.6" fill="#d9d000"/><rect x="630" y="335.7" width="5" height="4.3" fill="#d9d000"/><rect x="640" y="312.2" width="1" height="23.5" fill="#d9d000"/><rect x="638" y="328.2" width="5" height="6.0" fill="#d9d000"/><rect x="648" y="318.0" width="1" height="29.4" fill="#e4456b"/><rect x="646" y="326.1" width="5" height="16.6" fill="#e4456b"/><rect x="655" y="342.1" width="1" height="16.4" fill="#e4456b"/><rect x="653" y="347.0" width="5" height="7.9" fill="#e4456b"/><rect x="663" y="336.3" width="1" height="12.8" fill="#d9d000"/><rect x="661" y="338.9" width="5" height="8.9" fill="#d9d000"/><rect x="671" y="325.0" width="1" height="18.6" fill="#d9d000"/><rect x="669" y="332.9" width="5" height="8.1" fill="#d9d000"/><rect x="678" y="327.2" width="1" height="12.8" fill="#e4456b"/><rect x="676" y="332.1" width="5" height="5.1" fill="#e4456b"/><rect x="686" y="332.1" width="1" height="24.9" fill="#e4456b"/><rect x="684" y="334.2" width="5" height="19.6" fill="#e4456b"/><rect x="693" y="343.2" width="1" height="11.7" fill="#d9d000"/><rect x="691" y="349.1" width="5" height="4.3" fill="#d9d000"/><rect x="701" y="349.1" width="1" height="15.0" fill="#d9d000"/><rect x="699" y="349.1" width="5" height="1.2" fill="#d9d000"/><rect x="709" y="340.0" width="1" height="18.5" fill="#d9d000"/><rect x="707" y="342.1" width="5" height="11.7" fill="#d9d000"/><rect x="716" y="332.5" width="1" height="13.0" fill="#d9d000"/><rect x="714" y="335.1" width="5" height="9.1" fill="#d9d000"/><rect x="724" y="319.3" width="1" height="19.6" fill="#d9d000"/><rect x="722" y="327.2" width="5" height="9.1" fill="#d9d000"/><rect x="732" y="326.5" width="1" height="20.5" fill="#e4456b"/><rect x="730" y="328.7" width="5" height="11.9" fill="#e4456b"/><rect x="739" y="317.1" width="1" height="16.5" fill="#d9d000"/><rect x="737" y="327.2" width="5" height="2.7" fill="#d9d000"/><rect x="747" y="319.3" width="1" height="13.2" fill="#d9d000"/><rect x="745" y="323.0" width="5" height="1.2" fill="#d9d000"/><rect x="754" y="322.3" width="1" height="14.5" fill="#e4456b"/><rect x="752" y="324.0" width="5" height="11.1" fill="#e4456b"/><rect x="762" y="326.1" width="1" height="12.4" fill="#d9d000"/><rect x="760" y="331.0" width="5" height="1.2" fill="#d9d000"/><rect x="770" y="322.3" width="1" height="9.8" fill="#d9d000"/><rect x="768" y="327.2" width="5" height="3.2" fill="#d9d000"/><rect x="777" y="324.0" width="1" height="20.2" fill="#e4456b"/><rect x="775" y="325.0" width="5" height="18.6" fill="#e4456b"/><rect x="785" y="340.0" width="1" height="14.9" fill="#e4456b"/><rect x="783" y="341.0" width="5" height="9.0" fill="#e4456b"/><rect x="793" y="337.2" width="1" height="15.6" fill="#d9d000"/><rect x="791" y="349.1" width="5" height="1.2" fill="#d9d000"/><rect x="800" y="325.0" width="1" height="22.4" fill="#d9d000"/><rect x="798" y="328.2" width="5" height="17.1" fill="#d9d000"/><rect x="808" y="288.3" width="1" height="18.6" fill="#d9d000"/><rect x="806" y="290.2" width="5" height="15.9" fill="#d9d000"/><rect x="816" y="283.1" width="1" height="15.9" fill="#e4456b"/><rect x="814" y="285.1" width="5" height="13.1" fill="#e4456b"/><rect x="823" y="285.1" width="1" height="10.5" fill="#d9d000"/><rect x="821" y="288.3" width="5" height="5.9" fill="#d9d000"/><rect x="831" y="282.3" width="1" height="9.3" fill="#d9d000"/><rect x="829" y="286.2" width="5" height="1.2" fill="#d9d000"/><rect x="838" y="278.4" width="1" height="14.2" fill="#d9d000"/><rect x="836" y="283.7" width="5" height="4.0" fill="#d9d000"/><rect x="846" y="280.3" width="1" height="8.0" fill="#d9d000"/><rect x="844" y="281.7" width="5" height="6.0" fill="#d9d000"/><rect x="854" y="284.3" width="1" height="35.1" fill="#e4456b"/><rect x="852" y="285.7" width="5" height="30.3" fill="#e4456b"/><rect x="861" y="309.5" width="1" height="12.4" fill="#e4456b"/><rect x="859" y="315.4" width="5" height="5.3" fill="#e4456b"/><rect x="869" y="307.5" width="1" height="13.2" fill="#d9d000"/><rect x="867" y="308.9" width="5" height="9.9" fill="#d9d000"/><rect x="877" y="311.4" width="1" height="9.3" fill="#e4456b"/><rect x="875" y="315.4" width="5" height="2.6" fill="#e4456b"/><rect x="884" y="313.4" width="1" height="10.5" fill="#e4456b"/><rect x="882" y="315.4" width="5" height="4.6" fill="#e4456b"/><rect x="892" y="292.2" width="1" height="27.8" fill="#d9d000"/><rect x="890" y="297.0" width="5" height="19.8" fill="#d9d000"/><rect x="899" y="286.7" width="1" height="12.3" fill="#d9d000"/><rect x="897" y="290.2" width="5" height="8.0" fill="#d9d000"/><rect x="907" y="287.1" width="1" height="11.9" fill="#e4456b"/><rect x="905" y="291.6" width="5" height="6.0" fill="#e4456b"/><rect x="915" y="293.6" width="1" height="9.9" fill="#d9d000"/><rect x="913" y="295.0" width="5" height="7.5" fill="#d9d000"/>
<rect x="6" y="499.3" width="2" height="25.6" fill="#5ab8f0"/><rect x="13" y="499.3" width="2" height="21.7" fill="#5ab8f0"/><rect x="21" y="499.3" width="2" height="20.6" fill="#5ab8f0"/><rect x="29" y="499.3" width="2" height="12.5" fill="#5ab8f0"/><rect x="36" y="499.3" width="2" height="1.2" fill="#5ab8f0"/><rect x="44" y="494.0" width="2" height="5.3" fill="#f0336f"/><rect x="52" y="494.0" width="2" height="5.3" fill="#f0336f"/><rect x="59" y="499.3" width="2" height="4.6" fill="#26a69a"/><rect x="67" y="499.3" width="2" height="8.4" fill="#26a69a"/><rect x="74" y="499.3" width="2" height="9.6" fill="#26a69a"/><rect x="82" y="499.3" width="2" height="5.8" fill="#5ab8f0"/><rect x="90" y="499.3" width="2" height="4.6" fill="#5ab8f0"/><rect x="97" y="499.3" width="2" height="4.6" fill="#5ab8f0"/><rect x="105" y="499.3" width="2" height="1.9" fill="#5ab8f0"/><rect x="113" y="496.8" width="2" height="2.5" fill="#f0336f"/><rect x="120" y="490.7" width="2" height="8.6" fill="#f0336f"/><rect x="128" y="486.9" width="2" height="12.4" fill="#f0336f"/><rect x="136" y="478.7" width="2" height="20.6" fill="#f0336f"/><rect x="143" y="477.8" width="2" height="21.5" fill="#f0336f"/><rect x="151" y="476.8" width="2" height="22.5" fill="#f0336f"/><rect x="158" y="471.7" width="2" height="27.6" fill="#f0336f"/><rect x="166" y="464.9" width="2" height="34.4" fill="#f0336f"/><rect x="174" y="456.6" width="2" height="42.7" fill="#f0336f"/><rect x="181" y="451.7" width="2" height="47.6" fill="#f0336f"/><rect x="189" y="454.7" width="2" height="44.6" fill="#b4b4b4"/><rect x="197" y="456.6" width="2" height="42.7" fill="#b4b4b4"/><rect x="204" y="461.9" width="2" height="37.4" fill="#b4b4b4"/><rect x="212" y="469.4" width="2" height="29.9" fill="#b4b4b4"/><rect x="219" y="466.8" width="2" height="32.5" fill="#f0336f"/><rect x="227" y="469.0" width="2" height="30.3" fill="#b4b4b4"/><rect x="235" y="469.7" width="2" height="29.6" fill="#b4b4b4"/><rect x="242" y="478.7" width="2" height="20.6" fill="#b4b4b4"/><rect x="250" y="484.6" width="2" height="14.7" fill="#b4b4b4"/><rect x="258" y="486.6" width="2" height="12.7" fill="#b4b4b4"/><rect x="265" y="494.8" width="2" height="4.5" fill="#b4b4b4"/><rect x="273" y="497.7" width="2" height="1.6" fill="#b4b4b4"/><rect x="280" y="499.3" width="2" height="5.3" fill="#26a69a"/><rect x="288" y="499.3" width="2" height="16.6" fill="#26a69a"/><rect x="296" y="499.3" width="2" height="18.6" fill="#26a69a"/><rect x="303" y="499.3" width="2" height="16.6" fill="#5ab8f0"/><rect x="311" y="499.3" width="2" height="6.3" fill="#5ab8f0"/><rect x="319" y="499.3" width="2" height="7.2" fill="#26a69a"/><rect x="326" y="499.3" width="2" height="7.2" fill="#26a69a"/><rect x="334" y="499.3" width="2" height="7.2" fill="#26a69a"/><rect x="342" y="499.3" width="2" height="4.3" fill="#5ab8f0"/><rect x="349" y="499.3" width="2" height="1.0" fill="#5ab8f0"/><rect x="357" y="499.3" width="2" height="9.2" fill="#26a69a"/><rect x="364" y="499.3" width="2" height="13.5" fill="#26a69a"/><rect x="372" y="499.3" width="2" height="13.5" fill="#26a69a"/><rect x="380" y="499.3" width="2" height="16.0" fill="#26a69a"/><rect x="387" y="499.3" width="2" height="19.4" fill="#26a69a"/><rect x="395" y="499.3" width="2" height="24.5" fill="#26a69a"/><rect x="403" y="499.3" width="2" height="24.5" fill="#26a69a"/><rect x="410" y="499.3" width="2" height="21.3" fill="#5ab8f0"/><rect x="418" y="499.3" width="2" height="11.5" fill="#5ab8f0"/><rect x="425" y="498.3" width="2" height="1.0" fill="#f0336f"/><rect x="433" y="491.9" width="2" height="7.4" fill="#f0336f"/><rect x="441" y="497.1" width="2" height="2.2" fill="#b4b4b4"/><rect x="448" y="499.3" width="2" height="8.8" fill="#26a69a"/><rect x="456" y="499.3" width="2" height="14.7" fill="#26a69a"/><rect x="464" y="499.3" width="2" height="19.4" fill="#26a69a"/><rect x="471" y="499.3" width="2" height="18.6" fill="#5ab8f0"/><rect x="479" y="499.3" width="2" height="15.5" fill="#5ab8f0"/><rect x="486" y="499.3" width="2" height="14.7" fill="#5ab8f0"/><rect x="494" y="499.3" width="2" height="16.6" fill="#26a69a"/><rect x="502" y="499.3" width="2" height="21.3" fill="#26a69a"/><rect x="509" y="499.3" width="2" height="22.5" fill="#26a69a"/><rect x="517" y="499.3" width="2" height="23.7" fill="#26a69a"/><rect x="525" y="499.3" width="2" height="26.4" fill="#26a69a"/><rect x="532" y="499.3" width="2" height="22.5" fill="#5ab8f0"/><rect x="540" y="499.3" width="2" height="14.7" fill="#5ab8f0"/><rect x="547" y="499.3" width="2" height="8.8" fill="#5ab8f0"/><rect x="555" y="499.3" width="2" height="1.8" fill="#5ab8f0"/><rect x="563" y="499.3" width="2" height="2.9" fill="#26a69a"/><rect x="570" y="499.3" width="2" height="2.9" fill="#26a69a"/><rect x="578" y="499.3" width="2" height="3.7" fill="#26a69a"/><rect x="586" y="499.3" width="2" height="4.9" fill="#26a69a"/><rect x="593" y="499.3" width="2" height="7.6" fill="#26a69a"/><rect x="601" y="499.3" width="2" height="9.6" fill="#26a69a"/><rect x="609" y="499.3" width="2" height="12.7" fill="#26a69a"/><rect x="616" y="499.3" width="2" height="9.6" fill="#5ab8f0"/><rect x="624" y="499.3" width="2" height="5.7" fill="#5ab8f0"/><rect x="631" y="495.8" width="2" height="3.5" fill="#f0336f"/><rect x="639" y="488.9" width="2" height="10.4" fill="#f0336f"/><rect x="647" y="487.0" width="2" height="12.3" fill="#f0336f"/><rect x="654" y="487.9" width="2" height="11.4" fill="#b4b4b4"/><rect x="662" y="485.0" width="2" height="14.3" fill="#f0336f"/><rect x="670" y="482.1" width="2" height="17.2" fill="#f0336f"/><rect x="677" y="481.1" width="2" height="18.2" fill="#f0336f"/><rect x="685" y="484.0" width="2" height="15.3" fill="#b4b4b4"/><rect x="692" y="486.0" width="2" height="13.3" fill="#b4b4b4"/><rect x="700" y="487.0" width="2" height="12.3" fill="#b4b4b4"/><rect x="708" y="485.0" width="2" height="14.3" fill="#f0336f"/><rect x="715" y="483.1" width="2" height="16.2" fill="#f0336f"/><rect x="723" y="480.1" width="2" height="19.2" fill="#f0336f"/><rect x="731" y="482.1" width="2" height="17.2" fill="#b4b4b4"/><rect x="738" y="480.1" width="2" height="19.2" fill="#f0336f"/><rect x="746" y="479.1" width="2" height="20.2" fill="#f0336f"/><rect x="753" y="481.1" width="2" height="18.2" fill="#b4b4b4"/><rect x="761" y="482.1" width="2" height="17.2" fill="#b4b4b4"/><rect x="769" y="483.1" width="2" height="16.2" fill="#b4b4b4"/><rect x="776" y="487.9" width="2" height="11.4" fill="#b4b4b4"/><rect x="784" y="491.9" width="2" height="7.4" fill="#b4b4b4"/><rect x="792" y="495.2" width="2" height="4.1" fill="#b4b4b4"/><rect x="799" y="491.9" width="2" height="7.4" fill="#f0336f"/><rect x="807" y="481.1" width="2" height="18.2" fill="#f0336f"/><rect x="815" y="476.8" width="2" height="22.5" fill="#f0336f"/><rect x="822" y="474.2" width="2" height="25.1" fill="#f0336f"/><rect x="830" y="472.3" width="2" height="27.0" fill="#f0336f"/><rect x="837" y="471.7" width="2" height="27.6" fill="#f0336f"/><rect x="845" y="472.9" width="2" height="26.4" fill="#b4b4b4"/><rect x="853" y="482.7" width="2" height="16.6" fill="#b4b4b4"/><rect x="860" y="490.9" width="2" height="8.4" fill="#b4b4b4"/><rect x="868" y="493.8" width="2" height="5.5" fill="#b4b4b4"/><rect x="876" y="497.1" width="2" height="2.2" fill="#b4b4b4"/><rect x="883" y="499.3" width="2" height="2.3" fill="#26a69a"/><rect x="891" y="498.0" width="2" height="1.3" fill="#f0336f"/><rect x="898" y="494.8" width="2" height="4.5" fill="#f0336f"/><rect x="906" y="494.8" width="2" height="4.5" fill="#f0336f"/><rect x="914" y="494.8" width="2" height="4.5" fill="#f0336f"/>
<path d="M3.50 571.30 C4.87 572.22 8.70 574.75 11.70 576.80 C14.70 578.85 18.40 581.82 21.50 583.60 C24.60 585.38 27.37 586.85 30.30 587.50 C33.23 588.15 35.35 587.92 39.10 587.50 C42.85 587.08 48.55 585.00 52.80 585.00 C57.05 585.00 60.68 586.58 64.60 587.50 C68.52 588.42 72.07 589.68 76.30 590.50 C80.53 591.32 85.43 591.82 90.00 592.40 C94.57 592.98 99.45 593.83 103.70 594.00 C107.95 594.17 111.58 594.15 115.50 593.40 C119.42 592.65 123.30 591.30 127.20 589.50 C131.10 587.70 134.67 585.22 138.90 582.60 C143.13 579.98 148.03 577.38 152.60 573.80 C157.17 570.22 161.73 566.80 166.30 561.10 C170.87 555.40 175.62 545.60 180.00 539.60 C184.38 533.60 188.22 530.77 192.60 525.10 C196.98 519.43 201.73 511.13 206.30 505.60 C210.87 500.07 215.75 496.15 220.00 491.90 C224.25 487.65 227.88 483.53 231.80 480.10 C235.72 476.67 239.27 473.82 243.50 471.30 C247.73 468.78 252.63 466.37 257.20 465.00 C261.77 463.63 266.67 463.18 270.90 463.10 C275.13 463.02 279.02 463.30 282.60 464.50 C286.18 465.70 288.80 468.12 292.40 470.30 C296.00 472.48 300.28 475.97 304.20 477.60 C308.12 479.23 310.65 478.87 315.90 480.10 C321.15 481.33 330.12 483.92 335.70 485.00 C341.28 486.08 345.50 485.95 349.40 486.60 C353.30 487.25 355.85 487.70 359.10 488.90 C362.35 490.10 365.30 492.17 368.90 493.80 C372.50 495.43 377.10 496.58 380.70 498.70 C384.30 500.82 386.92 503.73 390.50 506.50 C394.08 509.27 398.62 512.75 402.20 515.30 C405.78 517.85 409.07 520.27 412.00 521.80 C414.93 523.33 416.87 524.17 419.80 524.50 C422.73 524.83 426.02 524.12 429.60 523.80 C433.18 523.48 438.27 522.42 441.30 522.60 C444.33 522.78 444.75 523.70 447.80 524.90 C450.85 526.10 455.52 527.68 459.60 529.80 C463.68 531.92 467.42 535.00 472.30 537.60 C477.18 540.20 483.85 542.63 488.90 545.40 C493.95 548.17 497.70 550.77 502.60 554.20 C507.50 557.63 513.40 562.23 518.30 566.00 C523.20 569.77 527.77 574.10 532.00 576.80 C536.23 579.50 539.47 581.07 543.70 582.20 C547.93 583.33 551.85 583.13 557.40 583.60 C562.95 584.07 571.45 584.35 577.00 585.00 C582.55 585.65 586.47 586.53 590.70 587.50 C594.93 588.47 598.17 589.40 602.40 590.80 C606.63 592.20 611.50 594.85 616.10 595.90 C620.70 596.95 624.42 598.30 630.00 597.10 C635.58 595.90 643.73 591.08 649.60 588.70 C655.47 586.32 660.32 584.98 665.20 582.80 C670.08 580.62 674.33 577.78 678.90 575.60 C683.47 573.42 687.70 571.83 692.60 569.70 C697.50 567.57 703.73 564.98 708.30 562.80 C712.87 560.62 716.08 558.72 720.00 556.60 C723.92 554.48 727.23 552.82 731.80 550.10 C736.37 547.38 741.53 543.78 747.40 540.30 C753.27 536.82 760.80 531.97 767.00 529.20 C773.20 526.43 779.38 525.00 784.60 523.70 C789.82 522.40 794.38 522.55 798.30 521.40 C802.22 520.25 805.23 518.30 808.10 516.80 C810.97 515.30 811.98 515.25 815.50 512.40 C819.02 509.55 824.32 504.10 829.20 499.70 C834.08 495.30 840.23 489.10 844.80 486.00 C849.37 482.90 852.35 482.32 856.60 481.10 C860.85 479.88 865.73 479.10 870.30 478.70 C874.87 478.30 879.05 478.78 884.00 478.70 C888.95 478.62 894.75 478.60 900.00 478.20 C905.25 477.80 912.92 476.62 915.50 476.30" fill="none" stroke="#1f9a70" stroke-width="1.8" stroke-linejoin="round"/>
<path d="M3.50 598.70 C5.20 599.02 10.63 599.53 13.70 600.60 C16.77 601.67 19.13 605.23 21.90 605.10 C24.67 604.97 27.75 602.90 30.30 599.80 C32.85 596.70 34.75 589.53 37.20 586.50 C39.65 583.47 42.47 582.63 45.00 581.60 C47.53 580.57 50.12 578.98 52.40 580.30 C54.68 581.62 56.18 586.77 58.70 589.50 C61.22 592.23 64.73 594.98 67.50 596.70 C70.27 598.42 72.68 599.70 75.30 599.80 C77.92 599.90 79.45 597.55 83.20 597.30 C86.95 597.05 94.05 598.53 97.80 598.30 C101.55 598.07 103.08 596.88 105.70 595.90 C108.32 594.92 110.90 594.28 113.50 592.40 C116.10 590.52 118.68 587.15 121.30 584.60 C123.92 582.05 126.58 580.37 129.20 577.10 C131.82 573.83 134.40 568.15 137.00 565.00 C139.60 561.85 142.20 560.55 144.80 558.20 C147.40 555.85 149.98 554.33 152.60 550.90 C155.22 547.47 157.75 543.03 160.50 537.60 C163.25 532.17 165.53 526.25 169.10 518.30 C172.67 510.35 178.63 495.93 181.90 489.90 C185.17 483.87 186.10 484.87 188.70 482.10 C191.30 479.33 194.88 475.42 197.50 473.30 C200.12 471.18 201.78 470.00 204.40 469.40 C207.02 468.80 210.60 471.40 213.20 469.70 C215.80 468.00 216.25 462.85 220.00 459.20 C223.75 455.55 231.78 449.20 235.70 447.80 C239.62 446.40 240.90 449.75 243.50 450.80 C246.10 451.85 248.68 453.68 251.30 454.10 C253.92 454.52 256.75 452.38 259.20 453.30 C261.65 454.22 263.72 458.07 266.00 459.60 C268.28 461.13 270.28 460.87 272.90 462.50 C275.52 464.13 279.10 465.82 281.70 469.40 C284.30 472.98 285.90 480.25 288.50 484.00 C291.10 487.75 294.68 490.27 297.30 491.90 C299.92 493.53 301.75 494.78 304.20 493.80 C306.65 492.82 309.23 486.88 312.00 486.00 C314.77 485.12 316.85 487.37 320.80 488.50 C324.75 489.63 331.92 492.47 335.70 492.80 C339.48 493.13 341.07 491.37 343.50 490.50 C345.93 489.63 347.85 486.40 350.30 487.60 C352.75 488.80 355.75 494.87 358.20 497.70 C360.65 500.53 362.57 502.80 365.00 504.60 C367.43 506.40 370.18 506.87 372.80 508.50 C375.42 510.13 378.08 511.80 380.70 514.40 C383.32 517.00 385.90 520.85 388.50 524.10 C391.10 527.35 394.02 531.25 396.30 533.90 C398.58 536.55 399.75 538.48 402.20 540.00 C404.65 541.52 408.23 543.68 411.00 543.00 C413.77 542.32 416.18 539.05 418.80 535.90 C421.42 532.75 424.18 527.43 426.70 524.10 C429.22 520.77 431.40 516.62 433.90 515.90 C436.40 515.18 439.22 517.00 441.70 519.80 C444.18 522.60 445.00 527.45 448.80 532.70 C452.60 537.95 460.42 547.55 464.50 551.30 C468.58 555.05 470.70 554.38 473.30 555.20 C475.90 556.02 477.50 555.55 480.10 556.20 C482.70 556.85 486.45 557.80 488.90 559.10 C491.35 560.40 492.52 561.38 494.80 564.00 C497.08 566.62 498.68 570.88 502.60 574.80 C506.52 578.72 514.38 583.75 518.30 587.50 C522.22 591.25 523.65 595.25 526.10 597.30 C528.55 599.35 530.55 600.13 533.00 599.80 C535.45 599.47 538.20 596.70 540.80 595.30 C543.40 593.90 546.00 593.02 548.60 591.40 C551.20 589.78 552.82 586.48 556.40 585.60 C559.98 584.72 565.03 585.28 570.10 586.10 C575.17 586.92 581.42 588.30 586.80 590.50 C592.18 592.70 598.48 596.70 602.40 599.30 C606.32 601.90 606.55 605.45 610.30 606.10 C614.05 606.75 621.15 605.15 624.90 603.20 C628.65 601.25 630.15 597.70 632.80 594.40 C635.45 591.10 638.17 585.98 640.80 583.40 C643.43 580.82 646.32 579.72 648.60 578.90 C650.88 578.08 651.90 579.80 654.50 578.50 C657.10 577.20 660.45 574.43 664.20 571.10 C667.95 567.77 673.23 560.68 677.00 558.50 C680.77 556.32 682.88 558.65 686.80 558.00 C690.72 557.35 696.92 555.92 700.50 554.60 C704.08 553.28 704.40 553.13 708.30 550.10 C712.20 547.07 719.98 539.23 723.90 536.40 C727.82 533.57 728.05 535.70 731.80 533.10 C735.55 530.50 742.17 523.28 746.40 520.80 C750.63 518.32 753.28 519.52 757.20 518.20 C761.12 516.88 766.32 513.55 769.90 512.90 C773.48 512.25 774.95 513.32 778.70 514.30 C782.45 515.28 788.97 518.70 792.40 518.80 C795.83 518.90 796.77 518.25 799.30 514.90 C801.83 511.55 804.58 503.52 807.60 498.70 C810.62 493.88 813.48 490.40 817.40 486.00 C821.32 481.60 826.37 476.55 831.10 472.30 C835.83 468.05 840.90 460.60 845.80 460.50 C850.70 460.40 856.42 469.25 860.50 471.70 C864.58 474.15 866.38 473.57 870.30 475.20 C874.22 476.83 879.12 481.58 884.00 481.50 C888.88 481.42 894.35 476.18 899.60 474.70 C904.85 473.22 912.85 472.95 915.50 472.60" fill="none" stroke="#d4561a" stroke-width="1.8" stroke-linejoin="round"/>
<rect x="0" y="2" width="3" height="655" fill="#161616"/><rect x="2" y="2" width="1" height="655" fill="#050505"/>
<rect x="0" y="2" width="2" height="32" fill="#0f7a12"/><rect x="0" y="424" width="2" height="24" fill="#0f7a12"/>
<rect x="0" y="17" width="1.5" height="1" fill="#9a9a9a"/><rect x="0" y="22" width="1.5" height="1" fill="#9a9a9a"/><rect x="0" y="52" width="1.5" height="1" fill="#9a9a9a"/><rect x="0" y="57" width="1.5" height="1" fill="#9a9a9a"/><rect x="0" y="86" width="1.5" height="1" fill="#9a9a9a"/><rect x="0" y="91" width="1.5" height="1" fill="#9a9a9a"/><rect x="0" y="121" width="1.5" height="1" fill="#9a9a9a"/><rect x="0" y="126" width="1.5" height="1" fill="#9a9a9a"/><rect x="0" y="155" width="1.5" height="1" fill="#9a9a9a"/><rect x="0" y="160" width="1.5" height="1" fill="#9a9a9a"/><rect x="0" y="190" width="1.5" height="1" fill="#9a9a9a"/><rect x="0" y="195" width="1.5" height="1" fill="#9a9a9a"/><rect x="0" y="225" width="1.5" height="1" fill="#9a9a9a"/><rect x="0" y="230" width="1.5" height="1" fill="#9a9a9a"/><rect x="0" y="260" width="1.5" height="1" fill="#9a9a9a"/><rect x="0" y="265" width="1.5" height="1" fill="#9a9a9a"/><rect x="0" y="295" width="1.5" height="1" fill="#9a9a9a"/><rect x="0" y="300" width="1.5" height="1" fill="#9a9a9a"/><rect x="0" y="330" width="1.5" height="1" fill="#9a9a9a"/><rect x="0" y="335" width="1.5" height="1" fill="#9a9a9a"/><rect x="0" y="365" width="1.5" height="1" fill="#9a9a9a"/><rect x="0" y="370" width="1.5" height="1" fill="#9a9a9a"/><rect x="0" y="404" width="1.5" height="1" fill="#9a9a9a"/><rect x="0" y="410" width="1.5" height="1" fill="#9a9a9a"/><rect x="0" y="413" width="1.5" height="1" fill="#9a9a9a"/><rect x="0" y="438" width="1.5" height="1" fill="#9a9a9a"/><rect x="0" y="443" width="1.5" height="1" fill="#9a9a9a"/><rect x="0" y="458" width="1.5" height="1" fill="#9a9a9a"/><rect x="0" y="463" width="1.5" height="1" fill="#9a9a9a"/><rect x="0" y="477" width="1.5" height="1" fill="#9a9a9a"/><rect x="0" y="482" width="1.5" height="1" fill="#9a9a9a"/><rect x="0" y="497" width="1.5" height="1" fill="#9a9a9a"/><rect x="0" y="502" width="1.5" height="1" fill="#9a9a9a"/><rect x="0" y="517" width="1.5" height="1" fill="#9a9a9a"/><rect x="0" y="522" width="1.5" height="1" fill="#9a9a9a"/><rect x="0" y="537" width="1.5" height="1" fill="#9a9a9a"/><rect x="0" y="542" width="1.5" height="1" fill="#9a9a9a"/><rect x="0" y="557" width="1.5" height="1" fill="#9a9a9a"/><rect x="0" y="562" width="1.5" height="1" fill="#9a9a9a"/><rect x="0" y="577" width="1.5" height="1" fill="#9a9a9a"/><rect x="0" y="582" width="1.5" height="1" fill="#9a9a9a"/><rect x="0" y="597" width="1.5" height="1" fill="#9a9a9a"/><rect x="0" y="602" width="1.5" height="1" fill="#9a9a9a"/><rect x="0" y="617" width="1.5" height="1" fill="#9a9a9a"/><rect x="0" y="622" width="1.5" height="1" fill="#9a9a9a"/><rect x="0" y="637" width="1.5" height="1" fill="#9a9a9a"/><rect x="0" y="642" width="1.5" height="1" fill="#9a9a9a"/>
<rect x="3" y="416" width="944" height="1" fill="#cfcfcf"/>
<rect x="3" y="624" width="1019" height="1" fill="#cfcfcf"/>
<rect x="947" y="2" width="1" height="650" fill="#cfcfcf"/>
<text x="12.3" y="22.0" font-size="12" fill="#d6d6d6" stroke="#d6d6d6" stroke-width="0.35" font-weight="normal" >FCPOc3</text><text x="62.0" y="20.3" font-size="12" fill="#d6d6d6" stroke="#d6d6d6" stroke-width="0.35" font-weight="normal" >·</text><text x="70.3" y="22.0" font-size="12" fill="#d6d6d6" stroke="#d6d6d6" stroke-width="0.35" font-weight="normal" >1</text><path d="M0.9 1.6H11.1M0.3 5.5H11.7M6 0.3V5.5Q5.4 9.8 0.3 11.7M6.2 6.2Q8 10 11.8 11.5" transform="translate(76.10 12.60) scale(1.0250)" fill="none" stroke="#d6d6d6" stroke-width="1.12"/><text x="93.2" y="20.3" font-size="12" fill="#d6d6d6" stroke="#d6d6d6" stroke-width="0.35" font-weight="normal" >·</text><text x="100.8" y="22.0" font-size="12" fill="#d6d6d6" stroke="#d6d6d6" stroke-width="0.35" font-weight="normal" >MDX</text><text x="131.5" y="20.3" font-size="12" fill="#d6d6d6" stroke="#d6d6d6" stroke-width="0.35" font-weight="normal" >·</text><text x="140.5" y="22.0" font-size="12" fill="#d6d6d6" stroke="#d6d6d6" stroke-width="0.35" font-weight="normal" textLength="60.4" lengthAdjust="spacingAndGlyphs">Trade Price</text><path d="M1.2 1.6H10.8M0.2 6H11.8M4.2 1.6V6.5Q4 10 1 11.7M8 1.6V11.8" transform="translate(208.90 12.60) scale(0.9833)" fill="none" stroke="#d6d6d6" stroke-width="1.17"/><text x="220.9" y="22.0" font-size="12" fill="#d6d6d6" stroke="#d6d6d6" stroke-width="0.35" font-weight="normal" >=</text><text x="229.5" y="22.0" font-size="12" fill="#d2c91e" stroke="#d2c91e" stroke-width="0.35" font-weight="normal" >4042</text><path d="M6 0.2V1.8M0.2 2.2H11.8M3.2 3.8H8.8V5.8H3.2ZM1.2 11.8V7H10.8V11Q10.8 11.8 9.6 11.7M4 8.4H8V10.4H4Z" transform="translate(261.70 12.60) scale(1.0083)" fill="none" stroke="#d6d6d6" stroke-width="1.14"/><text x="273.5" y="22.0" font-size="12" fill="#d6d6d6" stroke="#d6d6d6" stroke-width="0.35" font-weight="normal" >=</text><text x="281.9" y="22.0" font-size="12" fill="#d2c91e" stroke="#d2c91e" stroke-width="0.35" font-weight="normal" >4079</text><path d="M3 0.3Q2 3.5 0.2 5.6M2 3.6V11.8M5 2.4Q8.5 2 11.2 0.7M5.3 2.4V10.2L4.5 10.9M5.3 6H11.8M8 2.1Q8.3 8.5 11.8 11.4V9.4M6.8 11.2L8.4 11.8" transform="translate(314.60 12.60) scale(1.0083)" fill="none" stroke="#d6d6d6" stroke-width="1.14"/><text x="326.2" y="22.0" font-size="12" fill="#d6d6d6" stroke="#d6d6d6" stroke-width="0.35" font-weight="normal" >=</text><text x="334.7" y="22.0" font-size="12" fill="#d2c91e" stroke="#d2c91e" stroke-width="0.35" font-weight="normal" >4033</text><path d="M0.8 2.6V8.4L4 7.2M3.8 0.4V11.8M7.2 0.3Q6.6 2.8 5.2 4.5M6.3 3.2H11.8M10.2 3.2Q9.2 8.6 4.8 11.7M6.6 5.2Q8.4 9.6 11.9 11.5" transform="translate(366.90 12.60) scale(1.0000)" fill="none" stroke="#d6d6d6" stroke-width="1.15"/><text x="379.0" y="22.0" font-size="12" fill="#d6d6d6" stroke="#d6d6d6" stroke-width="0.35" font-weight="normal" >=</text><text x="387.5" y="22.0" font-size="12" fill="#d2c91e" stroke="#d2c91e" stroke-width="0.35" font-weight="normal" >4070</text><text x="419.8" y="22.0" font-size="12" fill="#d2c91e" stroke="#d2c91e" stroke-width="0.35" font-weight="normal" textLength="59.3" lengthAdjust="spacingAndGlyphs">8 (+0.20%)</text><rect x="12.5" y="35.5" width="28" height="20" rx="2.5" fill="none" stroke="#4a4a4a" stroke-width="1"/><path d="M28.6 42.2 L25 45.6 L28.6 49" fill="none" stroke="#d0d0d0" stroke-width="1.3"/><text x="12.3" y="69.0" font-size="12" fill="#d6d6d6" stroke="#d6d6d6" stroke-width="0.35" font-weight="normal" >BB 20 2</text><text x="63.6" y="69.0" font-size="12" fill="#ffffff" stroke="#ffffff" stroke-width="0.0" font-weight="bold" textLength="59.7" lengthAdjust="spacingAndGlyphs">4,009.9000</text><text x="129.5" y="69.0" font-size="12" fill="#e8b020" stroke="#e8b020" stroke-width="0.35" font-weight="normal" textLength="59.3" lengthAdjust="spacingAndGlyphs">4,192.4397</text><text x="194.5" y="69.0" font-size="12" fill="#8a66d0" stroke="#8a66d0" stroke-width="0.35" font-weight="normal" textLength="59.3" lengthAdjust="spacingAndGlyphs">3,827.3603</text><text x="12.3" y="437.0" font-size="12" fill="#d6d6d6" stroke="#d6d6d6" stroke-width="0.35" font-weight="normal" textLength="168" lengthAdjust="spacingAndGlyphs">MACD 12 26 close 9 EMA EMA</text><text x="190.0" y="437.0" font-size="12" fill="#d8336f" stroke="#d8336f" stroke-width="0.1" font-weight="normal" textLength="35.5" lengthAdjust="spacingAndGlyphs">4.0839</text><text x="231.5" y="437.0" font-size="12" fill="#d4521a" stroke="#d4521a" stroke-width="0.1" font-weight="normal" textLength="43" lengthAdjust="spacingAndGlyphs">30.4910</text><text x="281.0" y="437.0" font-size="12" fill="#20ac7c" stroke="#20ac7c" stroke-width="0.1" font-weight="normal" textLength="42.5" lengthAdjust="spacingAndGlyphs">26.4071</text><rect x="951.5" y="6.5" width="69" height="49" rx="4" fill="none" stroke="#555" stroke-width="1"/><text x="955.3" y="23.3" font-size="12" fill="#e6e6e6" stroke="#e6e6e6" stroke-width="0.35" font-weight="normal" >MYR</text><text x="955.3" y="47.0" font-size="12" fill="#e6e6e6" stroke="#e6e6e6" stroke-width="0.35" font-weight="normal" >t</text><path d="M1011 18 L1013.5 20.5 L1016 18M1011 42.2 L1013.5 44.7 L1016 42.2" fill="none" stroke="#e0e0e0" stroke-width="1.2"/><text x="955.5" y="85.1" font-size="13" fill="#d0d0d0" stroke="#d0d0d0" stroke-width="0.35" font-weight="normal" textLength="24.8" lengthAdjust="spacingAndGlyphs">5000</text><text x="955.5" y="131.1" font-size="13" fill="#d0d0d0" stroke="#d0d0d0" stroke-width="0.35" font-weight="normal" textLength="24.8" lengthAdjust="spacingAndGlyphs">4800</text><text x="955.5" y="177.6" font-size="13" fill="#d0d0d0" stroke="#d0d0d0" stroke-width="0.35" font-weight="normal" textLength="24.8" lengthAdjust="spacingAndGlyphs">4600</text><text x="955.5" y="223.6" font-size="13" fill="#d0d0d0" stroke="#d0d0d0" stroke-width="0.35" font-weight="normal" textLength="24.8" lengthAdjust="spacingAndGlyphs">4400</text><text x="955.5" y="270.3" font-size="13" fill="#d0d0d0" stroke="#d0d0d0" stroke-width="0.35" font-weight="normal" textLength="24.8" lengthAdjust="spacingAndGlyphs">4200</text><text x="955.5" y="316.6" font-size="13" fill="#d0d0d0" stroke="#d0d0d0" stroke-width="0.35" font-weight="normal" textLength="24.8" lengthAdjust="spacingAndGlyphs">4000</text><text x="955.5" y="363.1" font-size="13" fill="#d0d0d0" stroke="#d0d0d0" stroke-width="0.35" font-weight="normal" textLength="24.8" lengthAdjust="spacingAndGlyphs">3800</text><text x="955.5" y="409.6" font-size="13" fill="#d0d0d0" stroke="#d0d0d0" stroke-width="0.35" font-weight="normal" textLength="24.8" lengthAdjust="spacingAndGlyphs">3600</text><text x="955.2" y="437.2" font-size="13" fill="#d0d0d0" stroke="#d0d0d0" stroke-width="0.35" font-weight="normal" textLength="43.5" lengthAdjust="spacingAndGlyphs">80.0000</text><text x="955.2" y="535.8" font-size="13" fill="#d0d0d0" stroke="#d0d0d0" stroke-width="0.35" font-weight="normal" textLength="48" lengthAdjust="spacingAndGlyphs">–40.0000</text><text x="955.2" y="569.0" font-size="13" fill="#d0d0d0" stroke="#d0d0d0" stroke-width="0.35" font-weight="normal" textLength="48" lengthAdjust="spacingAndGlyphs">–80.0000</text><text x="955.2" y="601.9" font-size="13" fill="#d0d0d0" stroke="#d0d0d0" stroke-width="0.35" font-weight="normal" textLength="54.2" lengthAdjust="spacingAndGlyphs">–120.0000</text><path d="M948 259 H1018.5 Q1020 259 1020 260.5 V274.5 Q1020 276 1018.5 276 H948 Z" fill="#f5b50a"/><text x="955" y="272.1" font-size="13" fill="#1a1a1a" stroke="#1a1a1a" stroke-width="0.3" textLength="60" lengthAdjust="spacingAndGlyphs" font-family="Liberation Sans">4,192.4397</text><path d="M948 287 H984.5 Q986 287 986 288.5 V302.5 Q986 304 984.5 304 H948 Z" fill="#c9c800"/><text x="955" y="300.1" font-size="13" fill="#1a1a1a" stroke="#1a1a1a" stroke-width="0.3" textLength="24.8" lengthAdjust="spacingAndGlyphs" font-family="Liberation Sans">4070</text><path d="M948 304 H1018.5 Q1020 304 1020 305.5 V319.0 Q1020 320.5 1018.5 320.5 H948 Z" fill="#ffffff"/><text x="955" y="316.9" font-size="13" fill="#1a1a1a" stroke="#1a1a1a" stroke-width="0.3" textLength="60" lengthAdjust="spacingAndGlyphs" font-family="Liberation Sans">4,009.9000</text><path d="M948 343.5 H1018.5 Q1020 343.5 1020 345.0 V358.5 Q1020 360.0 1018.5 360.0 H948 Z" fill="#8c63d0"/><text x="955" y="356.4" font-size="13" fill="#ffffff" stroke="#ffffff" stroke-width="0.3" textLength="60" lengthAdjust="spacingAndGlyphs" font-family="Liberation Sans">3,827.3603</text><path d="M948 452 H1001.5 Q1003 452 1003 453.5 V466.5 Q1003 468 1001.5 468 H948 Z" fill="#ff5a0a"/><text x="955" y="464.6" font-size="13" fill="#ffffff" stroke="#ffffff" stroke-width="0.3" textLength="43" lengthAdjust="spacingAndGlyphs" font-family="Liberation Sans">30.4910</text><path d="M948 470 H1001.5 Q1003 470 1003 471.5 V484.5 Q1003 486 1001.5 486 H948 Z" fill="#12b884"/><text x="955" y="482.6" font-size="13" fill="#ffffff" stroke="#ffffff" stroke-width="0.3" textLength="43" lengthAdjust="spacingAndGlyphs" font-family="Liberation Sans">26.4071</text><path d="M948 487.5 H994.5 Q996 487.5 996 489.0 V502.0 Q996 503.5 994.5 503.5 H948 Z" fill="#e8307a"/><text x="955" y="500.1" font-size="13" fill="#ffffff" stroke="#ffffff" stroke-width="0.3" textLength="36" lengthAdjust="spacingAndGlyphs" font-family="Liberation Sans">4.0839</text><text x="128.0" y="642.5" font-size="12" fill="#d4d4d4" stroke="#d4d4d4" stroke-width="0.0" font-weight="bold" >2</text><path d="M3 1.4V7Q3 10 1 11.6M3 1.4H9.8V10.8Q9.8 11.7 8.6 11.6M3 4.6H9.8M3 7.8H9.8" transform="translate(135.10 631.60) scale(0.9500)" fill="none" stroke="#d4d4d4" stroke-width="1.89"/><text x="273.0" y="642.5" font-size="12" fill="#d4d4d4" stroke="#d4d4d4" stroke-width="0.0" font-weight="bold" >3</text><path d="M3 1.4V7Q3 10 1 11.6M3 1.4H9.8V10.8Q9.8 11.7 8.6 11.6M3 4.6H9.8M3 7.8H9.8" transform="translate(280.10 631.60) scale(0.9500)" fill="none" stroke="#d4d4d4" stroke-width="1.89"/><text x="418.0" y="642.5" font-size="12" fill="#d4d4d4" stroke="#d4d4d4" stroke-width="0.0" font-weight="bold" >4</text><path d="M3 1.4V7Q3 10 1 11.6M3 1.4H9.8V10.8Q9.8 11.7 8.6 11.6M3 4.6H9.8M3 7.8H9.8" transform="translate(425.10 631.60) scale(0.9500)" fill="none" stroke="#d4d4d4" stroke-width="1.89"/><text x="578.0" y="642.5" font-size="12" fill="#d4d4d4" stroke="#d4d4d4" stroke-width="0.0" font-weight="bold" >5</text><path d="M3 1.4V7Q3 10 1 11.6M3 1.4H9.8V10.8Q9.8 11.7 8.6 11.6M3 4.6H9.8M3 7.8H9.8" transform="translate(585.10 631.60) scale(0.9500)" fill="none" stroke="#d4d4d4" stroke-width="1.89"/><text x="730.0" y="642.5" font-size="12" fill="#d4d4d4" stroke="#d4d4d4" stroke-width="0.0" font-weight="bold" >6</text><path d="M3 1.4V7Q3 10 1 11.6M3 1.4H9.8V10.8Q9.8 11.7 8.6 11.6M3 4.6H9.8M3 7.8H9.8" transform="translate(737.10 631.60) scale(0.9500)" fill="none" stroke="#d4d4d4" stroke-width="1.89"/><text x="875.0" y="642.5" font-size="12" fill="#d4d4d4" stroke="#d4d4d4" stroke-width="0.0" font-weight="bold" >7</text><path d="M3 1.4V7Q3 10 1 11.6M3 1.4H9.8V10.8Q9.8 11.7 8.6 11.6M3 4.6H9.8M3 7.8H9.8" transform="translate(882.10 631.60) scale(0.9500)" fill="none" stroke="#d4d4d4" stroke-width="1.89"/><rect x="3" y="654" width="44" height="3" fill="#3a3a3a"/><rect x="48" y="654" width="42" height="3" fill="#3a3a3a"/><rect x="91" y="654" width="49" height="3" fill="#3a3a3a"/><rect x="141" y="654" width="55" height="3" fill="#3a3a3a"/><rect x="197" y="654" width="55" height="3" fill="#3a3a3a"/><rect x="253" y="654" width="54" height="3" fill="#3d4ef0"/><rect x="308" y="654" width="74" height="3" fill="#3a3a3a"/><rect x="383" y="654" width="41" height="3" fill="#3a3a3a"/><rect x="425" y="654" width="43" height="3" fill="#3a3a3a"/><rect x="469" y="654" width="42" height="3" fill="#3a3a3a"/><rect x="512" y="654" width="43" height="3" fill="#3a3a3a"/><rect x="556" y="654" width="50" height="3" fill="#3a3a3a"/><rect x="607" y="654" width="49" height="3" fill="#3a3a3a"/><rect x="657" y="654" width="59" height="3" fill="#3a3a3a"/><rect x="717" y="654" width="23" height="3" fill="#3a3a3a"/><rect x="756" y="654" width="199" height="3" fill="#1a1a1a" stroke="#3a3a3a" stroke-width="1"/><text x="0" y="0" transform="translate(901.3 632) scale(0.9 1)" text-anchor="middle" font-size="30.5" fill="#eef0f8" stroke="#3a3430" stroke-width="0.45" font-family="Liberation Sans">F</text><text x="0" y="0" transform="translate(922.7 632) scale(1.0 1)" text-anchor="middle" font-size="30.5" fill="#eef0f8" stroke="#3a3430" stroke-width="0.45" font-family="Liberation Sans">X</text><text x="0" y="0" transform="translate(944.0 632) scale(0.92 1)" text-anchor="middle" font-size="30.5" fill="#eef0f8" stroke="#3a3430" stroke-width="0.45" font-family="Liberation Sans">6</text><text x="0" y="0" transform="translate(964.3 632) scale(0.9 1)" text-anchor="middle" font-size="30.5" fill="#eef0f8" stroke="#3a3430" stroke-width="0.45" font-family="Liberation Sans">7</text><text x="0" y="0" transform="translate(983.5 632) scale(0.93 1)" text-anchor="middle" font-size="30.5" fill="#eef0f8" stroke="#3a3430" stroke-width="0.45" font-family="Liberation Sans">8</text><path d="M982.5 632.5 L989.5 632.5 L993 638.3 L989.5 644.1 L982.5 644.1 L979 638.3 Z" fill="none" stroke="#d8d8d8" stroke-width="1.3"/><circle cx="986" cy="638.3" r="2.2" fill="none" stroke="#d8d8d8" stroke-width="1.3"/>
</svg></body></html>
